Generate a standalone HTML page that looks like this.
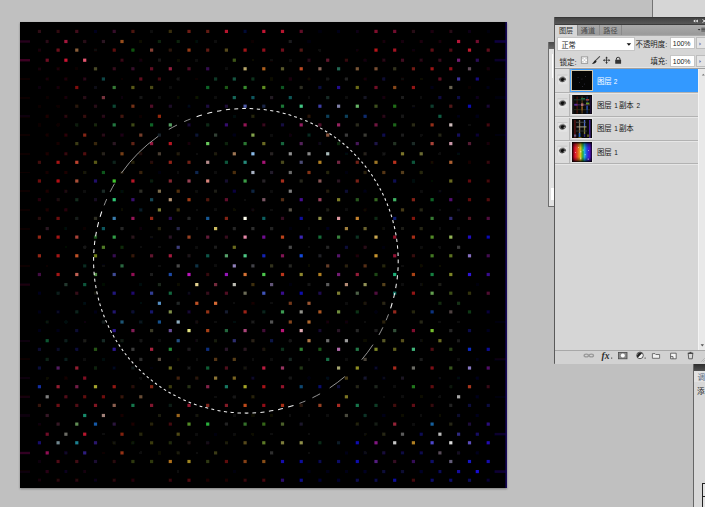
<!DOCTYPE html>
<html><head><meta charset="utf-8"><title>Photoshop</title>
<style>
html,body{margin:0;padding:0;}
body{width:705px;height:507px;overflow:hidden;background:#c0c0c0;position:relative;font-family:"Liberation Sans",sans-serif;}
.abs{position:absolute;}
#strip{left:652px;top:0;width:53px;height:17px;background:#d6d6d6;border-left:1.4px solid #747474;box-sizing:border-box;}
#canvas{left:20px;top:22px;width:487px;height:466px;background:#000;box-shadow:0 1px 2px rgba(0,0,0,.35);}
#cv{left:20px;top:22px;}
/* behind panel */
#bp{left:548px;top:42px;width:7px;height:165px;background:#e2e2e2;border-left:1px solid #6e6e6e;border-bottom:1px solid #6e6e6e;box-sizing:border-box;}
#bp .t{left:0;top:0;width:7px;height:7px;background:linear-gradient(#4a4a4a,#6a6a6a);}
/* layers panel */
#lp{left:554px;top:17px;width:151px;height:347px;background:#d6d6d6;border-left:1px solid #5a5a5a;border-bottom:1px solid #858585;box-sizing:border-box;}
#lp .title{left:0;top:0;width:151px;height:8px;background:linear-gradient(#303030 0,#444 18%,#565656 82%,#2e2e2e 100%);}
#lp .tabs{left:0;top:8px;width:151px;height:11px;background:linear-gradient(#aaa,#9a9a9a 85%,#b0b0b0);}
#lp .tab1{left:0;top:8px;width:21.6px;height:11.5px;background:#d6d6d6;}
.sep{background:#8b8b8b;width:1px;height:10px;top:8px;}
.wbox{background:#fff;border:1px solid #c6c6c6;box-sizing:border-box;}
.row{left:0;width:143px;height:24px;border-top:1px solid #e6e6e6;border-bottom:1px solid #b2b2b2;box-sizing:border-box;}
.eyecol{left:0;top:0;width:15px;height:22px;background:#dcdcdc;border-right:1px solid #b4b4b4;}
.hl{left:0;width:143px;height:1px;background:#b2b2b2}.ll{left:0;width:143px;height:1px;background:#e6e6e6}.thumb{left:17.3px;width:19.6px;height:19.3px;background:#0a0a0a;overflow:hidden;outline:1px solid #e6e6e6;}
.num{font-size:6.9px;color:#222;line-height:8px;white-space:pre;}
</style></head><body>
<div class="abs" id="strip"></div>
<div class="abs" id="canvas"></div>
<svg class="abs" id="cv" width="487" height="466" viewBox="20 22 487 466">
<defs><filter id="tb" x="-10%" y="-10%" width="120%" height="120%"><feGaussianBlur stdDeviation="0.55"/></filter><filter id="bl" x="-5%" y="-5%" width="110%" height="110%"><feGaussianBlur stdDeviation="0.75"/></filter></defs>
<g filter="url(#bl)"><rect x="20" y="40.3" width="10.0" height="2.4" fill="#25021b"/><rect x="20" y="59.0" width="10.0" height="2.4" fill="#3d0423"/><rect x="20" y="77.8" width="10.0" height="2.4" fill="#090106"/><rect x="20" y="96.4" width="10.0" height="2.4" fill="#090106"/><rect x="20" y="115.1" width="10.0" height="2.4" fill="#11020a"/><rect x="20" y="133.9" width="10.0" height="2.4" fill="#090103"/><rect x="20" y="152.6" width="10.0" height="2.4" fill="#090003"/><rect x="20" y="171.3" width="10.0" height="2.4" fill="#090003"/><rect x="20" y="190.0" width="10.0" height="2.4" fill="#090003"/><rect x="20" y="208.7" width="10.0" height="2.4" fill="#090003"/><rect x="20" y="227.4" width="10.0" height="2.4" fill="#090003"/><rect x="20" y="264.8" width="10.0" height="2.4" fill="#090003"/><rect x="20" y="283.4" width="10.0" height="2.4" fill="#1a030e"/><rect x="20" y="320.8" width="10.0" height="2.4" fill="#060106"/><rect x="20" y="339.6" width="10.0" height="2.4" fill="#11020a"/><rect x="20" y="358.2" width="10.0" height="2.4" fill="#090106"/><rect x="20" y="376.9" width="10.0" height="2.4" fill="#0d0209"/><rect x="20" y="395.6" width="10.0" height="2.4" fill="#15020e"/><rect x="20" y="414.3" width="10.0" height="2.4" fill="#11020a"/><rect x="20" y="451.8" width="10.0" height="2.4" fill="#310521"/><rect x="20" y="470.4" width="10.0" height="2.4" fill="#11020a"/><rect x="37.8" y="29.8" width="3.2" height="3.2" fill="#2f0715"/><rect x="37.8" y="48.5" width="3.2" height="3.2" fill="#180308"/><rect x="37.8" y="67.2" width="3.2" height="3.2" fill="#120307"/><rect x="37.8" y="85.9" width="3.2" height="3.2" fill="#0a0507"/><rect x="37.8" y="104.6" width="3.2" height="3.2" fill="#0e0204"/><rect x="37.8" y="123.3" width="3.2" height="3.2" fill="#0f0204"/><rect x="37.8" y="142.0" width="3.2" height="3.2" fill="#030000"/><rect x="37.8" y="160.7" width="3.2" height="3.2" fill="#40080b"/><rect x="37.8" y="179.4" width="3.2" height="3.2" fill="#6e0c11"/><rect x="37.8" y="198.1" width="3.2" height="3.2" fill="#270409"/><rect x="37.8" y="216.8" width="3.2" height="3.2" fill="#270a07"/><rect x="37.8" y="235.5" width="3.2" height="3.2" fill="#932817"/><rect x="37.8" y="254.2" width="3.2" height="3.2" fill="#932817"/><rect x="37.8" y="272.9" width="3.2" height="3.2" fill="#431043"/><rect x="37.8" y="291.6" width="3.2" height="3.2" fill="#05051b"/><rect x="37.8" y="310.3" width="3.2" height="3.2" fill="#040412"/><rect x="37.8" y="329.0" width="3.2" height="3.2" fill="#040416"/><rect x="37.8" y="347.7" width="3.2" height="3.2" fill="#080832"/><rect x="37.8" y="366.4" width="3.2" height="3.2" fill="#090c38"/><rect x="37.8" y="385.1" width="3.2" height="3.2" fill="#132ea0"/><rect x="37.8" y="403.8" width="3.2" height="3.2" fill="#35170c"/><rect x="37.8" y="422.5" width="3.2" height="3.2" fill="#0a0507"/><rect x="37.8" y="441.2" width="3.2" height="3.2" fill="#160b6a"/><rect x="37.8" y="459.9" width="3.2" height="3.2" fill="#0a050a"/><rect x="37.8" y="478.6" width="3.2" height="3.2" fill="#120307"/><rect x="45.6" y="39.9" width="3.2" height="3.2" fill="#270714"/><rect x="45.6" y="58.6" width="3.2" height="3.2" fill="#6e0c22"/><rect x="45.6" y="77.4" width="3.2" height="3.2" fill="#170308"/><rect x="45.6" y="96.0" width="3.2" height="3.2" fill="#0e0202"/><rect x="45.6" y="114.7" width="3.2" height="3.2" fill="#1c0305"/><rect x="45.6" y="133.5" width="3.2" height="3.2" fill="#120305"/><rect x="45.6" y="152.2" width="3.2" height="3.2" fill="#1c0205"/><rect x="45.6" y="170.9" width="3.2" height="3.2" fill="#120105"/><rect x="45.6" y="189.6" width="3.2" height="3.2" fill="#1c0205"/><rect x="45.6" y="208.3" width="3.2" height="3.2" fill="#1c0305"/><rect x="45.6" y="227.0" width="3.2" height="3.2" fill="#2a1720"/><rect x="45.6" y="264.3" width="3.2" height="3.2" fill="#070202"/><rect x="45.6" y="283.0" width="3.2" height="3.2" fill="#040404"/><rect x="45.6" y="301.7" width="3.2" height="3.2" fill="#020402"/><rect x="45.6" y="320.4" width="3.2" height="3.2" fill="#09140c"/><rect x="45.6" y="339.1" width="3.2" height="3.2" fill="#0f5430"/><rect x="45.6" y="357.8" width="3.2" height="3.2" fill="#0b2416"/><rect x="45.6" y="376.5" width="3.2" height="3.2" fill="#0b0b05"/><rect x="45.6" y="395.2" width="3.2" height="3.2" fill="#7f7f7f"/><rect x="45.6" y="413.9" width="3.2" height="3.2" fill="#361725"/><rect x="45.6" y="432.6" width="3.2" height="3.2" fill="#6f0f28"/><rect x="45.6" y="451.3" width="3.2" height="3.2" fill="#921055"/><rect x="45.6" y="470.0" width="3.2" height="3.2" fill="#270414"/><rect x="56.5" y="29.8" width="3.2" height="3.2" fill="#2f0711"/><rect x="56.5" y="48.5" width="3.2" height="3.2" fill="#6e0f1a"/><rect x="56.5" y="67.2" width="3.2" height="3.2" fill="#1c0308"/><rect x="56.5" y="85.9" width="3.2" height="3.2" fill="#170408"/><rect x="56.5" y="104.6" width="3.2" height="3.2" fill="#0e0204"/><rect x="56.5" y="123.3" width="3.2" height="3.2" fill="#0f0204"/><rect x="56.5" y="142.0" width="3.2" height="3.2" fill="#120305"/><rect x="56.5" y="160.7" width="3.2" height="3.2" fill="#a31212"/><rect x="56.5" y="179.4" width="3.2" height="3.2" fill="#b51013"/><rect x="56.5" y="198.1" width="3.2" height="3.2" fill="#1d0d10"/><rect x="56.5" y="216.8" width="3.2" height="3.2" fill="#6e0f0f"/><rect x="56.5" y="235.5" width="3.2" height="3.2" fill="#a31616"/><rect x="56.5" y="254.2" width="3.2" height="3.2" fill="#a31616"/><rect x="56.5" y="272.9" width="3.2" height="3.2" fill="#a31215"/><rect x="56.5" y="291.6" width="3.2" height="3.2" fill="#0b1e1a"/><rect x="56.5" y="310.3" width="3.2" height="3.2" fill="#080821"/><rect x="56.5" y="329.0" width="3.2" height="3.2" fill="#040416"/><rect x="56.5" y="347.7" width="3.2" height="3.2" fill="#090c27"/><rect x="56.5" y="366.4" width="3.2" height="3.2" fill="#531b61"/><rect x="56.5" y="385.1" width="3.2" height="3.2" fill="#931e31"/><rect x="56.5" y="403.8" width="3.2" height="3.2" fill="#6e0f12"/><rect x="56.5" y="422.5" width="3.2" height="3.2" fill="#361725"/><rect x="56.5" y="441.2" width="3.2" height="3.2" fill="#70878f"/><rect x="56.5" y="459.9" width="3.2" height="3.2" fill="#4f0913"/><rect x="56.5" y="478.6" width="3.2" height="3.2" fill="#27070c"/><rect x="64.3" y="39.9" width="3.2" height="3.2" fill="#a4173d"/><rect x="64.3" y="58.6" width="3.2" height="3.2" fill="#ca1333"/><rect x="64.3" y="77.4" width="3.2" height="3.2" fill="#1c040b"/><rect x="64.3" y="96.0" width="3.2" height="3.2" fill="#170408"/><rect x="64.3" y="114.7" width="3.2" height="3.2" fill="#27070c"/><rect x="64.3" y="133.5" width="3.2" height="3.2" fill="#2a0307"/><rect x="64.3" y="152.2" width="3.2" height="3.2" fill="#33070a"/><rect x="64.3" y="170.9" width="3.2" height="3.2" fill="#1c0205"/><rect x="64.3" y="189.6" width="3.2" height="3.2" fill="#1d0910"/><rect x="64.3" y="208.3" width="3.2" height="3.2" fill="#27040c"/><rect x="64.3" y="227.0" width="3.2" height="3.2" fill="#050b08"/><rect x="64.3" y="245.7" width="3.2" height="3.2" fill="#040704"/><rect x="64.3" y="264.3" width="3.2" height="3.2" fill="#040404"/><rect x="64.3" y="283.0" width="3.2" height="3.2" fill="#24392e"/><rect x="64.3" y="320.4" width="3.2" height="3.2" fill="#060f0f"/><rect x="64.3" y="339.1" width="3.2" height="3.2" fill="#0b1e1a"/><rect x="64.3" y="357.8" width="3.2" height="3.2" fill="#081e1a"/><rect x="64.3" y="376.5" width="3.2" height="3.2" fill="#120305"/><rect x="64.3" y="395.2" width="3.2" height="3.2" fill="#4f0a17"/><rect x="64.3" y="413.9" width="3.2" height="3.2" fill="#040404"/><rect x="64.3" y="432.6" width="3.2" height="3.2" fill="#6c6c65"/><rect x="64.3" y="451.3" width="3.2" height="3.2" fill="#0f0927"/><rect x="64.3" y="470.0" width="3.2" height="3.2" fill="#08051b"/><rect x="75.2" y="29.8" width="3.2" height="3.2" fill="#410c1b"/><rect x="75.2" y="48.5" width="3.2" height="3.2" fill="#895d38"/><rect x="75.2" y="67.2" width="3.2" height="3.2" fill="#0e0306"/><rect x="75.2" y="85.9" width="3.2" height="3.2" fill="#7e0d0f"/><rect x="75.2" y="104.6" width="3.2" height="3.2" fill="#29160b"/><rect x="75.2" y="123.3" width="3.2" height="3.2" fill="#0e1e0e"/><rect x="75.2" y="142.0" width="3.2" height="3.2" fill="#3a3a14"/><rect x="75.2" y="160.7" width="3.2" height="3.2" fill="#bc432e"/><rect x="75.2" y="179.4" width="3.2" height="3.2" fill="#ab5039"/><rect x="75.2" y="198.1" width="3.2" height="3.2" fill="#132b1c"/><rect x="75.2" y="216.8" width="3.2" height="3.2" fill="#161f1b"/><rect x="75.2" y="235.5" width="3.2" height="3.2" fill="#a94237"/><rect x="75.2" y="254.2" width="3.2" height="3.2" fill="#be5126"/><rect x="75.2" y="272.9" width="3.2" height="3.2" fill="#c16154"/><rect x="75.2" y="291.6" width="3.2" height="3.2" fill="#340e16"/><rect x="75.2" y="310.3" width="3.2" height="3.2" fill="#0b241b"/><rect x="75.2" y="329.0" width="3.2" height="3.2" fill="#091033"/><rect x="75.2" y="347.7" width="3.2" height="3.2" fill="#090938"/><rect x="75.2" y="366.4" width="3.2" height="3.2" fill="#931e31"/><rect x="75.2" y="385.1" width="3.2" height="3.2" fill="#711c47"/><rect x="75.2" y="403.8" width="3.2" height="3.2" fill="#4f0d13"/><rect x="75.2" y="422.5" width="3.2" height="3.2" fill="#618d54"/><rect x="75.2" y="441.2" width="3.2" height="3.2" fill="#1d8191"/><rect x="75.2" y="459.9" width="3.2" height="3.2" fill="#410c12"/><rect x="75.2" y="478.6" width="3.2" height="3.2" fill="#27070c"/><rect x="83.1" y="39.9" width="3.2" height="3.2" fill="#280a19"/><rect x="83.1" y="58.6" width="3.2" height="3.2" fill="#e65671"/><rect x="83.1" y="77.4" width="3.2" height="3.2" fill="#270714"/><rect x="83.1" y="96.0" width="3.2" height="3.2" fill="#280e15"/><rect x="83.1" y="114.7" width="3.2" height="3.2" fill="#340a0a"/><rect x="83.1" y="133.5" width="3.2" height="3.2" fill="#822616"/><rect x="83.1" y="152.2" width="3.2" height="3.2" fill="#4f090c"/><rect x="83.1" y="170.9" width="3.2" height="3.2" fill="#141407"/><rect x="83.1" y="189.6" width="3.2" height="3.2" fill="#0b0b0b"/><rect x="83.1" y="208.3" width="3.2" height="3.2" fill="#040404"/><rect x="83.1" y="227.0" width="3.2" height="3.2" fill="#0a0202"/><rect x="83.1" y="245.7" width="3.2" height="3.2" fill="#151515"/><rect x="83.1" y="264.3" width="3.2" height="3.2" fill="#092a20"/><rect x="83.1" y="283.0" width="3.2" height="3.2" fill="#0f553b"/><rect x="83.1" y="301.7" width="3.2" height="3.2" fill="#040f13"/><rect x="83.1" y="320.4" width="3.2" height="3.2" fill="#070407"/><rect x="83.1" y="339.1" width="3.2" height="3.2" fill="#1a1a16"/><rect x="83.1" y="357.8" width="3.2" height="3.2" fill="#080b0b"/><rect x="83.1" y="376.5" width="3.2" height="3.2" fill="#7f1024"/><rect x="83.1" y="395.2" width="3.2" height="3.2" fill="#5e0a10"/><rect x="83.1" y="413.9" width="3.2" height="3.2" fill="#17896a"/><rect x="83.1" y="432.6" width="3.2" height="3.2" fill="#b6142d"/><rect x="83.1" y="451.3" width="3.2" height="3.2" fill="#2d1e7e"/><rect x="83.1" y="470.0" width="3.2" height="3.2" fill="#12030b"/><rect x="93.9" y="29.8" width="3.2" height="3.2" fill="#06051b"/><rect x="93.9" y="48.5" width="3.2" height="3.2" fill="#100808"/><rect x="93.9" y="67.2" width="3.2" height="3.2" fill="#494928"/><rect x="93.9" y="85.9" width="3.2" height="3.2" fill="#080812"/><rect x="93.9" y="104.6" width="3.2" height="3.2" fill="#280a19"/><rect x="93.9" y="123.3" width="3.2" height="3.2" fill="#17250c"/><rect x="93.9" y="142.0" width="3.2" height="3.2" fill="#372711"/><rect x="93.9" y="160.7" width="3.2" height="3.2" fill="#595916"/><rect x="93.9" y="179.4" width="3.2" height="3.2" fill="#200f6b"/><rect x="93.9" y="198.1" width="3.2" height="3.2" fill="#151123"/><rect x="93.9" y="216.8" width="3.2" height="3.2" fill="#2d2d22"/><rect x="93.9" y="235.5" width="3.2" height="3.2" fill="#1d551d"/><rect x="93.9" y="254.2" width="3.2" height="3.2" fill="#6c7b19"/><rect x="93.9" y="272.9" width="3.2" height="3.2" fill="#528c46"/><rect x="93.9" y="291.6" width="3.2" height="3.2" fill="#151511"/><rect x="93.9" y="310.3" width="3.2" height="3.2" fill="#040416"/><rect x="93.9" y="329.0" width="3.2" height="3.2" fill="#020206"/><rect x="93.9" y="347.7" width="3.2" height="3.2" fill="#275516"/><rect x="93.9" y="366.4" width="3.2" height="3.2" fill="#0f240f"/><rect x="93.9" y="385.1" width="3.2" height="3.2" fill="#a3a32f"/><rect x="93.9" y="403.8" width="3.2" height="3.2" fill="#801424"/><rect x="93.9" y="422.5" width="3.2" height="3.2" fill="#1558a6"/><rect x="93.9" y="441.2" width="3.2" height="3.2" fill="#2c196d"/><rect x="93.9" y="459.9" width="3.2" height="3.2" fill="#1e0a33"/><rect x="93.9" y="478.6" width="3.2" height="3.2" fill="#070516"/><rect x="101.8" y="39.9" width="3.2" height="3.2" fill="#2a1720"/><rect x="101.8" y="58.6" width="3.2" height="3.2" fill="#060606"/><rect x="101.8" y="77.4" width="3.2" height="3.2" fill="#0e4646"/><rect x="101.8" y="96.0" width="3.2" height="3.2" fill="#74323d"/><rect x="101.8" y="114.7" width="3.2" height="3.2" fill="#270714"/><rect x="101.8" y="133.5" width="3.2" height="3.2" fill="#270714"/><rect x="101.8" y="152.2" width="3.2" height="3.2" fill="#25201c"/><rect x="101.8" y="170.9" width="3.2" height="3.2" fill="#0f541c"/><rect x="101.8" y="189.6" width="3.2" height="3.2" fill="#1d2c26"/><rect x="101.8" y="227.0" width="3.2" height="3.2" fill="#10565d"/><rect x="101.8" y="245.7" width="3.2" height="3.2" fill="#4f7925"/><rect x="101.8" y="264.3" width="3.2" height="3.2" fill="#07070b"/><rect x="101.8" y="283.0" width="3.2" height="3.2" fill="#040704"/><rect x="101.8" y="301.7" width="3.2" height="3.2" fill="#040404"/><rect x="101.8" y="320.4" width="3.2" height="3.2" fill="#161f1f"/><rect x="101.8" y="339.1" width="3.2" height="3.2" fill="#142b26"/><rect x="101.8" y="357.8" width="3.2" height="3.2" fill="#040707"/><rect x="101.8" y="376.5" width="3.2" height="3.2" fill="#040204"/><rect x="101.8" y="395.2" width="3.2" height="3.2" fill="#6e0f0f"/><rect x="101.8" y="413.9" width="3.2" height="3.2" fill="#a18179"/><rect x="101.8" y="432.6" width="3.2" height="3.2" fill="#070707"/><rect x="101.8" y="451.3" width="3.2" height="3.2" fill="#070404"/><rect x="101.8" y="470.0" width="3.2" height="3.2" fill="#010101"/><rect x="112.6" y="29.8" width="3.2" height="3.2" fill="#350b29"/><rect x="112.6" y="48.5" width="3.2" height="3.2" fill="#5e0e11"/><rect x="112.6" y="67.2" width="3.2" height="3.2" fill="#340b1a"/><rect x="112.6" y="85.9" width="3.2" height="3.2" fill="#367836"/><rect x="112.6" y="104.6" width="3.2" height="3.2" fill="#0d4633"/><rect x="112.6" y="123.3" width="3.2" height="3.2" fill="#227741"/><rect x="112.6" y="142.0" width="3.2" height="3.2" fill="#2a1720"/><rect x="112.6" y="160.7" width="3.2" height="3.2" fill="#0b241b"/><rect x="112.6" y="179.4" width="3.2" height="3.2" fill="#40c42d"/><rect x="112.6" y="198.1" width="3.2" height="3.2" fill="#2dc473"/><rect x="112.6" y="216.8" width="3.2" height="3.2" fill="#3a7bac"/><rect x="112.6" y="235.5" width="3.2" height="3.2" fill="#319c46"/><rect x="112.6" y="254.2" width="3.2" height="3.2" fill="#36104f"/><rect x="112.6" y="272.9" width="3.2" height="3.2" fill="#3f4b95"/><rect x="112.6" y="291.6" width="3.2" height="3.2" fill="#21187d"/><rect x="112.6" y="310.3" width="3.2" height="3.2" fill="#20136c"/><rect x="112.6" y="329.0" width="3.2" height="3.2" fill="#2d198e"/><rect x="112.6" y="347.7" width="3.2" height="3.2" fill="#2c158e"/><rect x="112.6" y="366.4" width="3.2" height="3.2" fill="#05081b"/><rect x="112.6" y="385.1" width="3.2" height="3.2" fill="#911912"/><rect x="112.6" y="403.8" width="3.2" height="3.2" fill="#8a5e50"/><rect x="112.6" y="422.5" width="3.2" height="3.2" fill="#2a133b"/><rect x="112.6" y="441.2" width="3.2" height="3.2" fill="#15150a"/><rect x="112.6" y="459.9" width="3.2" height="3.2" fill="#270709"/><rect x="112.6" y="478.6" width="3.2" height="3.2" fill="#270709"/><rect x="120.4" y="39.9" width="3.2" height="3.2" fill="#984e1c"/><rect x="120.4" y="58.6" width="3.2" height="3.2" fill="#340815"/><rect x="120.4" y="77.4" width="3.2" height="3.2" fill="#0a0204"/><rect x="120.4" y="96.0" width="3.2" height="3.2" fill="#0a0507"/><rect x="120.4" y="114.7" width="3.2" height="3.2" fill="#42180d"/><rect x="120.4" y="133.5" width="3.2" height="3.2" fill="#1d0614"/><rect x="120.4" y="152.2" width="3.2" height="3.2" fill="#743e18"/><rect x="120.4" y="170.9" width="3.2" height="3.2" fill="#1e150a"/><rect x="120.4" y="189.6" width="3.2" height="3.2" fill="#060f0b"/><rect x="120.4" y="208.3" width="3.2" height="3.2" fill="#0b0b05"/><rect x="120.4" y="227.0" width="3.2" height="3.2" fill="#262626"/><rect x="120.4" y="245.7" width="3.2" height="3.2" fill="#0f2a09"/><rect x="120.4" y="264.3" width="3.2" height="3.2" fill="#2a673f"/><rect x="120.4" y="283.0" width="3.2" height="3.2" fill="#040404"/><rect x="120.4" y="320.4" width="3.2" height="3.2" fill="#1f5774"/><rect x="120.4" y="339.1" width="3.2" height="3.2" fill="#121f16"/><rect x="120.4" y="357.8" width="3.2" height="3.2" fill="#010101"/><rect x="120.4" y="376.5" width="3.2" height="3.2" fill="#040402"/><rect x="120.4" y="395.2" width="3.2" height="3.2" fill="#351209"/><rect x="120.4" y="413.9" width="3.2" height="3.2" fill="#120305"/><rect x="120.4" y="432.6" width="3.2" height="3.2" fill="#81210f"/><rect x="120.4" y="451.3" width="3.2" height="3.2" fill="#953315"/><rect x="131.3" y="29.8" width="3.2" height="3.2" fill="#4b1510"/><rect x="131.3" y="48.5" width="3.2" height="3.2" fill="#0e5411"/><rect x="131.3" y="67.2" width="3.2" height="3.2" fill="#350f2a"/><rect x="131.3" y="85.9" width="3.2" height="3.2" fill="#595919"/><rect x="131.3" y="104.6" width="3.2" height="3.2" fill="#733116"/><rect x="131.3" y="123.3" width="3.2" height="3.2" fill="#3c4816"/><rect x="131.3" y="142.0" width="3.2" height="3.2" fill="#612414"/><rect x="131.3" y="160.7" width="3.2" height="3.2" fill="#252009"/><rect x="131.3" y="179.4" width="3.2" height="3.2" fill="#b71828"/><rect x="131.3" y="198.1" width="3.2" height="3.2" fill="#37116d"/><rect x="131.3" y="216.8" width="3.2" height="3.2" fill="#931656"/><rect x="131.3" y="235.5" width="3.2" height="3.2" fill="#2a161b"/><rect x="131.3" y="254.2" width="3.2" height="3.2" fill="#351709"/><rect x="131.3" y="272.9" width="3.2" height="3.2" fill="#921055"/><rect x="131.3" y="291.6" width="3.2" height="3.2" fill="#1f086b"/><rect x="131.3" y="310.3" width="3.2" height="3.2" fill="#0d1133"/><rect x="131.3" y="329.0" width="3.2" height="3.2" fill="#821e56"/><rect x="131.3" y="347.7" width="3.2" height="3.2" fill="#3b3b3b"/><rect x="131.3" y="366.4" width="3.2" height="3.2" fill="#111a1a"/><rect x="131.3" y="385.1" width="3.2" height="3.2" fill="#281108"/><rect x="131.3" y="403.8" width="3.2" height="3.2" fill="#14764c"/><rect x="131.3" y="422.5" width="3.2" height="3.2" fill="#1c0606"/><rect x="131.3" y="441.2" width="3.2" height="3.2" fill="#0a1907"/><rect x="131.3" y="459.9" width="3.2" height="3.2" fill="#2e3910"/><rect x="131.3" y="478.6" width="3.2" height="3.2" fill="#220609"/><rect x="139.2" y="39.9" width="3.2" height="3.2" fill="#0e0e06"/><rect x="139.2" y="58.6" width="3.2" height="3.2" fill="#13050b"/><rect x="139.2" y="77.4" width="3.2" height="3.2" fill="#5f0e1d"/><rect x="139.2" y="96.0" width="3.2" height="3.2" fill="#151515"/><rect x="139.2" y="114.7" width="3.2" height="3.2" fill="#0e0505"/><rect x="139.2" y="133.5" width="3.2" height="3.2" fill="#753e29"/><rect x="139.2" y="152.2" width="3.2" height="3.2" fill="#1e1107"/><rect x="139.2" y="170.9" width="3.2" height="3.2" fill="#37210d"/><rect x="139.2" y="189.6" width="3.2" height="3.2" fill="#2d2d27"/><rect x="139.2" y="208.3" width="3.2" height="3.2" fill="#081f29"/><rect x="139.2" y="227.0" width="3.2" height="3.2" fill="#0e0207"/><rect x="139.2" y="245.7" width="3.2" height="3.2" fill="#070707"/><rect x="139.2" y="264.3" width="3.2" height="3.2" fill="#040202"/><rect x="139.2" y="283.0" width="3.2" height="3.2" fill="#050b0b"/><rect x="139.2" y="301.7" width="3.2" height="3.2" fill="#040707"/><rect x="139.2" y="320.4" width="3.2" height="3.2" fill="#0a191e"/><rect x="139.2" y="339.1" width="3.2" height="3.2" fill="#151515"/><rect x="139.2" y="357.8" width="3.2" height="3.2" fill="#2d2d2d"/><rect x="139.2" y="376.5" width="3.2" height="3.2" fill="#0b0b0b"/><rect x="139.2" y="395.2" width="3.2" height="3.2" fill="#674c34"/><rect x="139.2" y="413.9" width="3.2" height="3.2" fill="#010101"/><rect x="139.2" y="432.6" width="3.2" height="3.2" fill="#26260d"/><rect x="139.2" y="451.3" width="3.2" height="3.2" fill="#0b0b0b"/><rect x="150.0" y="29.8" width="3.2" height="3.2" fill="#0c0c0c"/><rect x="150.0" y="48.5" width="3.2" height="3.2" fill="#864035"/><rect x="150.0" y="67.2" width="3.2" height="3.2" fill="#5f0e22"/><rect x="150.0" y="85.9" width="3.2" height="3.2" fill="#494917"/><rect x="150.0" y="104.6" width="3.2" height="3.2" fill="#500d26"/><rect x="150.0" y="123.3" width="3.2" height="3.2" fill="#116427"/><rect x="150.0" y="142.0" width="3.2" height="3.2" fill="#92163c"/><rect x="150.0" y="160.7" width="3.2" height="3.2" fill="#270a07"/><rect x="150.0" y="179.4" width="3.2" height="3.2" fill="#071e0d"/><rect x="150.0" y="198.1" width="3.2" height="3.2" fill="#154754"/><rect x="150.0" y="216.8" width="3.2" height="3.2" fill="#932817"/><rect x="150.0" y="235.5" width="3.2" height="3.2" fill="#07070b"/><rect x="150.0" y="254.2" width="3.2" height="3.2" fill="#5f122d"/><rect x="150.0" y="272.9" width="3.2" height="3.2" fill="#1a1a1a"/><rect x="150.0" y="291.6" width="3.2" height="3.2" fill="#313c93"/><rect x="150.0" y="310.3" width="3.2" height="3.2" fill="#12126b"/><rect x="150.0" y="329.0" width="3.2" height="3.2" fill="#3a3a25"/><rect x="150.0" y="347.7" width="3.2" height="3.2" fill="#a5203e"/><rect x="150.0" y="366.4" width="3.2" height="3.2" fill="#040407"/><rect x="150.0" y="385.1" width="3.2" height="3.2" fill="#822613"/><rect x="150.0" y="403.8" width="3.2" height="3.2" fill="#81182f"/><rect x="150.0" y="422.5" width="3.2" height="3.2" fill="#252009"/><rect x="150.0" y="441.2" width="3.2" height="3.2" fill="#3a3a11"/><rect x="150.0" y="459.9" width="3.2" height="3.2" fill="#2e390d"/><rect x="150.0" y="478.6" width="3.2" height="3.2" fill="#040202"/><rect x="157.8" y="39.9" width="3.2" height="3.2" fill="#08240b"/><rect x="157.8" y="58.6" width="3.2" height="3.2" fill="#191515"/><rect x="157.8" y="77.4" width="3.2" height="3.2" fill="#41080e"/><rect x="157.8" y="96.0" width="3.2" height="3.2" fill="#070707"/><rect x="157.8" y="114.7" width="3.2" height="3.2" fill="#932811"/><rect x="157.8" y="133.5" width="3.2" height="3.2" fill="#17202a"/><rect x="157.8" y="152.2" width="3.2" height="3.2" fill="#483c30"/><rect x="157.8" y="170.9" width="3.2" height="3.2" fill="#04040e"/><rect x="157.8" y="189.6" width="3.2" height="3.2" fill="#7b6c4b"/><rect x="157.8" y="208.3" width="3.2" height="3.2" fill="#7d7d31"/><rect x="157.8" y="227.0" width="3.2" height="3.2" fill="#252009"/><rect x="157.8" y="245.7" width="3.2" height="3.2" fill="#070707"/><rect x="157.8" y="264.3" width="3.2" height="3.2" fill="#070707"/><rect x="157.8" y="283.0" width="3.2" height="3.2" fill="#1c251c"/><rect x="157.8" y="301.7" width="3.2" height="3.2" fill="#568fc2"/><rect x="157.8" y="320.4" width="3.2" height="3.2" fill="#17508b"/><rect x="157.8" y="339.1" width="3.2" height="3.2" fill="#101009"/><rect x="157.8" y="357.8" width="3.2" height="3.2" fill="#584b3f"/><rect x="157.8" y="413.9" width="3.2" height="3.2" fill="#1a1a0b"/><rect x="157.8" y="451.3" width="3.2" height="3.2" fill="#101006"/><rect x="168.7" y="29.8" width="3.2" height="3.2" fill="#382d0f"/><rect x="168.7" y="48.5" width="3.2" height="3.2" fill="#29160b"/><rect x="168.7" y="67.2" width="3.2" height="3.2" fill="#931e3d"/><rect x="168.7" y="85.9" width="3.2" height="3.2" fill="#0f080b"/><rect x="168.7" y="104.6" width="3.2" height="3.2" fill="#1d0a28"/><rect x="168.7" y="123.3" width="3.2" height="3.2" fill="#559f63"/><rect x="168.7" y="142.0" width="3.2" height="3.2" fill="#b61423"/><rect x="168.7" y="160.7" width="3.2" height="3.2" fill="#932216"/><rect x="168.7" y="179.4" width="3.2" height="3.2" fill="#832731"/><rect x="168.7" y="198.1" width="3.2" height="3.2" fill="#b59475"/><rect x="168.7" y="216.8" width="3.2" height="3.2" fill="#2a0f4f"/><rect x="168.7" y="235.5" width="3.2" height="3.2" fill="#291224"/><rect x="168.7" y="254.2" width="3.2" height="3.2" fill="#a51b3e"/><rect x="168.7" y="272.9" width="3.2" height="3.2" fill="#1f4aa4"/><rect x="168.7" y="291.6" width="3.2" height="3.2" fill="#12653d"/><rect x="168.7" y="310.3" width="3.2" height="3.2" fill="#808f49"/><rect x="168.7" y="329.0" width="3.2" height="3.2" fill="#694e98"/><rect x="168.7" y="347.7" width="3.2" height="3.2" fill="#248837"/><rect x="168.7" y="366.4" width="3.2" height="3.2" fill="#6a6a1d"/><rect x="168.7" y="385.1" width="3.2" height="3.2" fill="#3a3a11"/><rect x="168.7" y="403.8" width="3.2" height="3.2" fill="#081e15"/><rect x="168.7" y="422.5" width="3.2" height="3.2" fill="#41080e"/><rect x="168.7" y="441.2" width="3.2" height="3.2" fill="#212b11"/><rect x="168.7" y="459.9" width="3.2" height="3.2" fill="#ae6f1b"/><rect x="168.7" y="478.6" width="3.2" height="3.2" fill="#33070a"/><rect x="176.6" y="39.9" width="3.2" height="3.2" fill="#0b240b"/><rect x="176.6" y="58.6" width="3.2" height="3.2" fill="#101006"/><rect x="176.6" y="77.4" width="3.2" height="3.2" fill="#151515"/><rect x="176.6" y="96.0" width="3.2" height="3.2" fill="#080f06"/><rect x="176.6" y="114.7" width="3.2" height="3.2" fill="#070707"/><rect x="176.6" y="133.5" width="3.2" height="3.2" fill="#0b0b0b"/><rect x="176.6" y="152.2" width="3.2" height="3.2" fill="#241b0b"/><rect x="176.6" y="170.9" width="3.2" height="3.2" fill="#070707"/><rect x="176.6" y="189.6" width="3.2" height="3.2" fill="#532f11"/><rect x="176.6" y="208.3" width="3.2" height="3.2" fill="#382d0c"/><rect x="176.6" y="227.0" width="3.2" height="3.2" fill="#27274a"/><rect x="176.6" y="245.7" width="3.2" height="3.2" fill="#3d3d7b"/><rect x="176.6" y="264.3" width="3.2" height="3.2" fill="#4a4a4a"/><rect x="176.6" y="283.0" width="3.2" height="3.2" fill="#101006"/><rect x="176.6" y="301.7" width="3.2" height="3.2" fill="#212626"/><rect x="176.6" y="320.4" width="3.2" height="3.2" fill="#8fafc0"/><rect x="176.6" y="339.1" width="3.2" height="3.2" fill="#235083"/><rect x="176.6" y="357.8" width="3.2" height="3.2" fill="#0f0803"/><rect x="176.6" y="376.5" width="3.2" height="3.2" fill="#44220e"/><rect x="176.6" y="413.9" width="3.2" height="3.2" fill="#9b651f"/><rect x="176.6" y="432.6" width="3.2" height="3.2" fill="#504914"/><rect x="176.6" y="451.3" width="3.2" height="3.2" fill="#1a1a0b"/><rect x="176.6" y="470.0" width="3.2" height="3.2" fill="#070707"/><rect x="187.4" y="29.8" width="3.2" height="3.2" fill="#701b13"/><rect x="187.4" y="48.5" width="3.2" height="3.2" fill="#963a16"/><rect x="187.4" y="67.2" width="3.2" height="3.2" fill="#501126"/><rect x="187.4" y="85.9" width="3.2" height="3.2" fill="#040202"/><rect x="187.4" y="104.6" width="3.2" height="3.2" fill="#050817"/><rect x="187.4" y="123.3" width="3.2" height="3.2" fill="#140933"/><rect x="187.4" y="142.0" width="3.2" height="3.2" fill="#120307"/><rect x="187.4" y="160.7" width="3.2" height="3.2" fill="#702018"/><rect x="187.4" y="179.4" width="3.2" height="3.2" fill="#984255"/><rect x="187.4" y="198.1" width="3.2" height="3.2" fill="#9f3a14"/><rect x="187.4" y="216.8" width="3.2" height="3.2" fill="#262626"/><rect x="187.4" y="235.5" width="3.2" height="3.2" fill="#974122"/><rect x="187.4" y="254.2" width="3.2" height="3.2" fill="#1f161a"/><rect x="187.4" y="272.9" width="3.2" height="3.2" fill="#ba15ba"/><rect x="187.4" y="291.6" width="3.2" height="3.2" fill="#0b0817"/><rect x="187.4" y="310.3" width="3.2" height="3.2" fill="#140933"/><rect x="187.4" y="329.0" width="3.2" height="3.2" fill="#e6e682"/><rect x="187.4" y="347.7" width="3.2" height="3.2" fill="#1f1b1f"/><rect x="187.4" y="366.4" width="3.2" height="3.2" fill="#1a1a1a"/><rect x="187.4" y="385.1" width="3.2" height="3.2" fill="#273215"/><rect x="187.4" y="403.8" width="3.2" height="3.2" fill="#921a31"/><rect x="187.4" y="422.5" width="3.2" height="3.2" fill="#528b27"/><rect x="187.4" y="441.2" width="3.2" height="3.2" fill="#1e1515"/><rect x="187.4" y="459.9" width="3.2" height="3.2" fill="#a08720"/><rect x="187.4" y="478.6" width="3.2" height="3.2" fill="#4f090f"/><rect x="195.2" y="39.9" width="3.2" height="3.2" fill="#050f08"/><rect x="195.2" y="58.6" width="3.2" height="3.2" fill="#101010"/><rect x="195.2" y="77.4" width="3.2" height="3.2" fill="#0a0404"/><rect x="195.2" y="96.0" width="3.2" height="3.2" fill="#0c1406"/><rect x="195.2" y="133.5" width="3.2" height="3.2" fill="#0a1533"/><rect x="195.2" y="152.2" width="3.2" height="3.2" fill="#070707"/><rect x="195.2" y="170.9" width="3.2" height="3.2" fill="#0a254f"/><rect x="195.2" y="189.6" width="3.2" height="3.2" fill="#101009"/><rect x="195.2" y="208.3" width="3.2" height="3.2" fill="#070707"/><rect x="195.2" y="227.0" width="3.2" height="3.2" fill="#070707"/><rect x="195.2" y="245.7" width="3.2" height="3.2" fill="#0b0b0b"/><rect x="195.2" y="264.3" width="3.2" height="3.2" fill="#0e3244"/><rect x="195.2" y="283.0" width="3.2" height="3.2" fill="#e4d18f"/><rect x="195.2" y="301.7" width="3.2" height="3.2" fill="#be5126"/><rect x="195.2" y="320.4" width="3.2" height="3.2" fill="#140c10"/><rect x="195.2" y="339.1" width="3.2" height="3.2" fill="#0f080b"/><rect x="195.2" y="357.8" width="3.2" height="3.2" fill="#070707"/><rect x="195.2" y="376.5" width="3.2" height="3.2" fill="#29160b"/><rect x="195.2" y="413.9" width="3.2" height="3.2" fill="#151511"/><rect x="195.2" y="432.6" width="3.2" height="3.2" fill="#0b0b0b"/><rect x="195.2" y="451.3" width="3.2" height="3.2" fill="#070707"/><rect x="206.1" y="29.8" width="3.2" height="3.2" fill="#601a12"/><rect x="206.1" y="48.5" width="3.2" height="3.2" fill="#601a12"/><rect x="206.1" y="67.2" width="3.2" height="3.2" fill="#36104f"/><rect x="206.1" y="85.9" width="3.2" height="3.2" fill="#116427"/><rect x="206.1" y="104.6" width="3.2" height="3.2" fill="#1e0a40"/><rect x="206.1" y="123.3" width="3.2" height="3.2" fill="#0f2a17"/><rect x="206.1" y="142.0" width="3.2" height="3.2" fill="#68c85b"/><rect x="206.1" y="160.7" width="3.2" height="3.2" fill="#b58b8b"/><rect x="206.1" y="179.4" width="3.2" height="3.2" fill="#da857d"/><rect x="206.1" y="198.1" width="3.2" height="3.2" fill="#50140d"/><rect x="206.1" y="216.8" width="3.2" height="3.2" fill="#185894"/><rect x="206.1" y="235.5" width="3.2" height="3.2" fill="#611b39"/><rect x="206.1" y="254.2" width="3.2" height="3.2" fill="#105548"/><rect x="206.1" y="272.9" width="3.2" height="3.2" fill="#33070d"/><rect x="206.1" y="291.6" width="3.2" height="3.2" fill="#340b1a"/><rect x="206.1" y="310.3" width="3.2" height="3.2" fill="#953315"/><rect x="206.1" y="329.0" width="3.2" height="3.2" fill="#a94116"/><rect x="206.1" y="347.7" width="3.2" height="3.2" fill="#0f2d7e"/><rect x="206.1" y="366.4" width="3.2" height="3.2" fill="#105d36"/><rect x="206.1" y="385.1" width="3.2" height="3.2" fill="#822249"/><rect x="206.1" y="403.8" width="3.2" height="3.2" fill="#82271e"/><rect x="206.1" y="422.5" width="3.2" height="3.2" fill="#29af3c"/><rect x="206.1" y="441.2" width="3.2" height="3.2" fill="#141019"/><rect x="206.1" y="459.9" width="3.2" height="3.2" fill="#2e3913"/><rect x="206.1" y="478.6" width="3.2" height="3.2" fill="#1c0606"/><rect x="214.0" y="39.9" width="3.2" height="3.2" fill="#070707"/><rect x="214.0" y="77.4" width="3.2" height="3.2" fill="#0e3727"/><rect x="214.0" y="96.0" width="3.2" height="3.2" fill="#070707"/><rect x="214.0" y="133.5" width="3.2" height="3.2" fill="#304135"/><rect x="214.0" y="152.2" width="3.2" height="3.2" fill="#1f1a0b"/><rect x="214.0" y="170.9" width="3.2" height="3.2" fill="#0b0b0b"/><rect x="214.0" y="189.6" width="3.2" height="3.2" fill="#1a1a12"/><rect x="214.0" y="208.3" width="3.2" height="3.2" fill="#0b0b0b"/><rect x="214.0" y="227.0" width="3.2" height="3.2" fill="#ccbb60"/><rect x="214.0" y="245.7" width="3.2" height="3.2" fill="#1a1a1a"/><rect x="214.0" y="264.3" width="3.2" height="3.2" fill="#0b0b0b"/><rect x="214.0" y="283.0" width="3.2" height="3.2" fill="#732c3d"/><rect x="214.0" y="301.7" width="3.2" height="3.2" fill="#d56a34"/><rect x="214.0" y="320.4" width="3.2" height="3.2" fill="#070707"/><rect x="214.0" y="339.1" width="3.2" height="3.2" fill="#151a0a"/><rect x="214.0" y="357.8" width="3.2" height="3.2" fill="#543519"/><rect x="214.0" y="376.5" width="3.2" height="3.2" fill="#8c7536"/><rect x="214.0" y="395.2" width="3.2" height="3.2" fill="#070707"/><rect x="214.0" y="432.6" width="3.2" height="3.2" fill="#04040a"/><rect x="214.0" y="451.3" width="3.2" height="3.2" fill="#3a3a14"/><rect x="224.8" y="29.8" width="3.2" height="3.2" fill="#b6142d"/><rect x="224.8" y="48.5" width="3.2" height="3.2" fill="#574a1b"/><rect x="224.8" y="67.2" width="3.2" height="3.2" fill="#0f0c0c"/><rect x="224.8" y="85.9" width="3.2" height="3.2" fill="#1d5519"/><rect x="224.8" y="104.6" width="3.2" height="3.2" fill="#1e0e34"/><rect x="224.8" y="123.3" width="3.2" height="3.2" fill="#360d6d"/><rect x="224.8" y="142.0" width="3.2" height="3.2" fill="#0f240f"/><rect x="224.8" y="160.7" width="3.2" height="3.2" fill="#0f553b"/><rect x="224.8" y="179.4" width="3.2" height="3.2" fill="#140d2d"/><rect x="224.8" y="198.1" width="3.2" height="3.2" fill="#5f0e2c"/><rect x="224.8" y="216.8" width="3.2" height="3.2" fill="#812119"/><rect x="224.8" y="235.5" width="3.2" height="3.2" fill="#340b1f"/><rect x="224.8" y="254.2" width="3.2" height="3.2" fill="#56a06a"/><rect x="224.8" y="272.9" width="3.2" height="3.2" fill="#9412b7"/><rect x="224.8" y="291.6" width="3.2" height="3.2" fill="#4f0a20"/><rect x="224.8" y="310.3" width="3.2" height="3.2" fill="#121a2f"/><rect x="224.8" y="329.0" width="3.2" height="3.2" fill="#20663e"/><rect x="224.8" y="347.7" width="3.2" height="3.2" fill="#2a172a"/><rect x="224.8" y="366.4" width="3.2" height="3.2" fill="#4f0d1c"/><rect x="224.8" y="385.1" width="3.2" height="3.2" fill="#157761"/><rect x="224.8" y="403.8" width="3.2" height="3.2" fill="#811d26"/><rect x="224.8" y="422.5" width="3.2" height="3.2" fill="#202020"/><rect x="224.8" y="441.2" width="3.2" height="3.2" fill="#1a1a08"/><rect x="224.8" y="459.9" width="3.2" height="3.2" fill="#5e0a0d"/><rect x="224.8" y="478.6" width="3.2" height="3.2" fill="#1c0305"/><rect x="232.7" y="39.9" width="3.2" height="3.2" fill="#010101"/><rect x="232.7" y="58.6" width="3.2" height="3.2" fill="#3e5718"/><rect x="232.7" y="77.4" width="3.2" height="3.2" fill="#165542"/><rect x="232.7" y="96.0" width="3.2" height="3.2" fill="#196658"/><rect x="232.7" y="114.7" width="3.2" height="3.2" fill="#060f0f"/><rect x="232.7" y="133.5" width="3.2" height="3.2" fill="#040416"/><rect x="232.7" y="152.2" width="3.2" height="3.2" fill="#9f7755"/><rect x="232.7" y="170.9" width="3.2" height="3.2" fill="#4c2e0e"/><rect x="232.7" y="189.6" width="3.2" height="3.2" fill="#08063e"/><rect x="232.7" y="208.3" width="3.2" height="3.2" fill="#0b0b05"/><rect x="232.7" y="227.0" width="3.2" height="3.2" fill="#262626"/><rect x="232.7" y="245.7" width="3.2" height="3.2" fill="#6a6a1d"/><rect x="232.7" y="264.3" width="3.2" height="3.2" fill="#9181bb"/><rect x="232.7" y="283.0" width="3.2" height="3.2" fill="#bcbcb3"/><rect x="232.7" y="301.7" width="3.2" height="3.2" fill="#070707"/><rect x="232.7" y="320.4" width="3.2" height="3.2" fill="#050b0b"/><rect x="232.7" y="339.1" width="3.2" height="3.2" fill="#2f2f70"/><rect x="232.7" y="357.8" width="3.2" height="3.2" fill="#553c16"/><rect x="232.7" y="376.5" width="3.2" height="3.2" fill="#796320"/><rect x="232.7" y="395.2" width="3.2" height="3.2" fill="#151515"/><rect x="232.7" y="413.9" width="3.2" height="3.2" fill="#0b0b08"/><rect x="232.7" y="432.6" width="3.2" height="3.2" fill="#101009"/><rect x="232.7" y="470.0" width="3.2" height="3.2" fill="#04040a"/><rect x="243.5" y="29.8" width="3.2" height="3.2" fill="#060832"/><rect x="243.5" y="48.5" width="3.2" height="3.2" fill="#a31219"/><rect x="243.5" y="67.2" width="3.2" height="3.2" fill="#b7a669"/><rect x="243.5" y="85.9" width="3.2" height="3.2" fill="#388a2e"/><rect x="243.5" y="104.6" width="3.2" height="3.2" fill="#4f5caa"/><rect x="243.5" y="123.3" width="3.2" height="3.2" fill="#921355"/><rect x="243.5" y="142.0" width="3.2" height="3.2" fill="#2b7730"/><rect x="243.5" y="160.7" width="3.2" height="3.2" fill="#268a7b"/><rect x="243.5" y="179.4" width="3.2" height="3.2" fill="#3b9d47"/><rect x="243.5" y="198.1" width="3.2" height="3.2" fill="#070707"/><rect x="243.5" y="216.8" width="3.2" height="3.2" fill="#ffffed"/><rect x="243.5" y="235.5" width="3.2" height="3.2" fill="#e587a7"/><rect x="243.5" y="254.2" width="3.2" height="3.2" fill="#4ec784"/><rect x="243.5" y="272.9" width="3.2" height="3.2" fill="#d67235"/><rect x="243.5" y="291.6" width="3.2" height="3.2" fill="#6c6c57"/><rect x="243.5" y="310.3" width="3.2" height="3.2" fill="#9c2317"/><rect x="243.5" y="329.0" width="3.2" height="3.2" fill="#ab447a"/><rect x="243.5" y="347.7" width="3.2" height="3.2" fill="#2a1720"/><rect x="243.5" y="366.4" width="3.2" height="3.2" fill="#191511"/><rect x="243.5" y="385.1" width="3.2" height="3.2" fill="#a3a327"/><rect x="243.5" y="403.8" width="3.2" height="3.2" fill="#bd4a1a"/><rect x="243.5" y="422.5" width="3.2" height="3.2" fill="#356f2b"/><rect x="243.5" y="441.2" width="3.2" height="3.2" fill="#574a1b"/><rect x="243.5" y="459.9" width="3.2" height="3.2" fill="#853f13"/><rect x="243.5" y="478.6" width="3.2" height="3.2" fill="#33070a"/><rect x="251.3" y="39.9" width="3.2" height="3.2" fill="#0a0202"/><rect x="251.3" y="58.6" width="3.2" height="3.2" fill="#070705"/><rect x="251.3" y="77.4" width="3.2" height="3.2" fill="#0d301c"/><rect x="251.3" y="96.0" width="3.2" height="3.2" fill="#10565d"/><rect x="251.3" y="114.7" width="3.2" height="3.2" fill="#26260d"/><rect x="251.3" y="133.5" width="3.2" height="3.2" fill="#82a24c"/><rect x="251.3" y="152.2" width="3.2" height="3.2" fill="#89b9e7"/><rect x="251.3" y="170.9" width="3.2" height="3.2" fill="#a9b1c2"/><rect x="251.3" y="189.6" width="3.2" height="3.2" fill="#102542"/><rect x="251.3" y="208.3" width="3.2" height="3.2" fill="#0f080b"/><rect x="251.3" y="227.0" width="3.2" height="3.2" fill="#2d2d2d"/><rect x="251.3" y="245.7" width="3.2" height="3.2" fill="#010101"/><rect x="251.3" y="264.3" width="3.2" height="3.2" fill="#434349"/><rect x="251.3" y="283.0" width="3.2" height="3.2" fill="#3e2d0d"/><rect x="251.3" y="301.7" width="3.2" height="3.2" fill="#120505"/><rect x="251.3" y="320.4" width="3.2" height="3.2" fill="#1a1a1a"/><rect x="251.3" y="339.1" width="3.2" height="3.2" fill="#2b2118"/><rect x="251.3" y="357.8" width="3.2" height="3.2" fill="#070707"/><rect x="251.3" y="376.5" width="3.2" height="3.2" fill="#0c0826"/><rect x="251.3" y="395.2" width="3.2" height="3.2" fill="#252009"/><rect x="251.3" y="413.9" width="3.2" height="3.2" fill="#101006"/><rect x="251.3" y="432.6" width="3.2" height="3.2" fill="#0b0b05"/><rect x="262.2" y="29.8" width="3.2" height="3.2" fill="#c01533"/><rect x="262.2" y="48.5" width="3.2" height="3.2" fill="#91111c"/><rect x="262.2" y="67.2" width="3.2" height="3.2" fill="#ad5f1f"/><rect x="262.2" y="85.9" width="3.2" height="3.2" fill="#5f8c20"/><rect x="262.2" y="104.6" width="3.2" height="3.2" fill="#1d274a"/><rect x="262.2" y="123.3" width="3.2" height="3.2" fill="#34081a"/><rect x="262.2" y="142.0" width="3.2" height="3.2" fill="#6a6a24"/><rect x="262.2" y="160.7" width="3.2" height="3.2" fill="#a51274"/><rect x="262.2" y="179.4" width="3.2" height="3.2" fill="#262126"/><rect x="262.2" y="198.1" width="3.2" height="3.2" fill="#795563"/><rect x="262.2" y="216.8" width="3.2" height="3.2" fill="#115e5e"/><rect x="262.2" y="235.5" width="3.2" height="3.2" fill="#710f91"/><rect x="262.2" y="254.2" width="3.2" height="3.2" fill="#1223b1"/><rect x="262.2" y="272.9" width="3.2" height="3.2" fill="#4dc64d"/><rect x="262.2" y="291.6" width="3.2" height="3.2" fill="#4154ba"/><rect x="262.2" y="310.3" width="3.2" height="3.2" fill="#09241a"/><rect x="262.2" y="329.0" width="3.2" height="3.2" fill="#420d36"/><rect x="262.2" y="347.7" width="3.2" height="3.2" fill="#1e150e"/><rect x="262.2" y="366.4" width="3.2" height="3.2" fill="#b81c3f"/><rect x="262.2" y="385.1" width="3.2" height="3.2" fill="#a31219"/><rect x="262.2" y="403.8" width="3.2" height="3.2" fill="#901118"/><rect x="262.2" y="422.5" width="3.2" height="3.2" fill="#346619"/><rect x="262.2" y="441.2" width="3.2" height="3.2" fill="#5d7a26"/><rect x="262.2" y="459.9" width="3.2" height="3.2" fill="#874d18"/><rect x="262.2" y="478.6" width="3.2" height="3.2" fill="#41080e"/><rect x="270.0" y="58.6" width="3.2" height="3.2" fill="#0b0808"/><rect x="270.0" y="77.4" width="3.2" height="3.2" fill="#101006"/><rect x="270.0" y="96.0" width="3.2" height="3.2" fill="#201b24"/><rect x="270.0" y="133.5" width="3.2" height="3.2" fill="#0b0b0b"/><rect x="270.0" y="152.2" width="3.2" height="3.2" fill="#252020"/><rect x="270.0" y="170.9" width="3.2" height="3.2" fill="#201b2a"/><rect x="270.0" y="189.6" width="3.2" height="3.2" fill="#090f0f"/><rect x="270.0" y="208.3" width="3.2" height="3.2" fill="#070707"/><rect x="270.0" y="227.0" width="3.2" height="3.2" fill="#202020"/><rect x="270.0" y="264.3" width="3.2" height="3.2" fill="#33331f"/><rect x="270.0" y="283.0" width="3.2" height="3.2" fill="#625478"/><rect x="270.0" y="301.7" width="3.2" height="3.2" fill="#070707"/><rect x="270.0" y="320.4" width="3.2" height="3.2" fill="#525252"/><rect x="270.0" y="339.1" width="3.2" height="3.2" fill="#0e1647"/><rect x="270.0" y="357.8" width="3.2" height="3.2" fill="#0b0b08"/><rect x="270.0" y="376.5" width="3.2" height="3.2" fill="#010101"/><rect x="270.0" y="413.9" width="3.2" height="3.2" fill="#0b0805"/><rect x="270.0" y="432.6" width="3.2" height="3.2" fill="#070707"/><rect x="270.0" y="451.3" width="3.2" height="3.2" fill="#2d2d2d"/><rect x="280.9" y="29.8" width="3.2" height="3.2" fill="#b6142d"/><rect x="280.9" y="48.5" width="3.2" height="3.2" fill="#6e0f1a"/><rect x="280.9" y="67.2" width="3.2" height="3.2" fill="#59592a"/><rect x="280.9" y="85.9" width="3.2" height="3.2" fill="#0f5421"/><rect x="280.9" y="104.6" width="3.2" height="3.2" fill="#1a7634"/><rect x="280.9" y="123.3" width="3.2" height="3.2" fill="#150d40"/><rect x="280.9" y="142.0" width="3.2" height="3.2" fill="#12653d"/><rect x="280.9" y="160.7" width="3.2" height="3.2" fill="#49491e"/><rect x="280.9" y="179.4" width="3.2" height="3.2" fill="#a62f1d"/><rect x="280.9" y="198.1" width="3.2" height="3.2" fill="#542f14"/><rect x="280.9" y="216.8" width="3.2" height="3.2" fill="#340b24"/><rect x="280.9" y="235.5" width="3.2" height="3.2" fill="#bc431d"/><rect x="280.9" y="254.2" width="3.2" height="3.2" fill="#811254"/><rect x="280.9" y="272.9" width="3.2" height="3.2" fill="#ba361b"/><rect x="280.9" y="291.6" width="3.2" height="3.2" fill="#370e8d"/><rect x="280.9" y="310.3" width="3.2" height="3.2" fill="#3c9d53"/><rect x="280.9" y="329.0" width="3.2" height="3.2" fill="#b81375"/><rect x="280.9" y="347.7" width="3.2" height="3.2" fill="#0a301c"/><rect x="280.9" y="366.4" width="3.2" height="3.2" fill="#973561"/><rect x="280.9" y="385.1" width="3.2" height="3.2" fill="#91122a"/><rect x="280.9" y="403.8" width="3.2" height="3.2" fill="#a62f16"/><rect x="280.9" y="422.5" width="3.2" height="3.2" fill="#4c602b"/><rect x="280.9" y="441.2" width="3.2" height="3.2" fill="#7d7d3b"/><rect x="280.9" y="459.9" width="3.2" height="3.2" fill="#170aae"/><rect x="280.9" y="478.6" width="3.2" height="3.2" fill="#2a096b"/><rect x="288.7" y="39.9" width="3.2" height="3.2" fill="#1a1a1f"/><rect x="288.7" y="58.6" width="3.2" height="3.2" fill="#0b0b0b"/><rect x="288.7" y="77.4" width="3.2" height="3.2" fill="#1c060f"/><rect x="288.7" y="96.0" width="3.2" height="3.2" fill="#105555"/><rect x="288.7" y="133.5" width="3.2" height="3.2" fill="#0e050b"/><rect x="288.7" y="152.2" width="3.2" height="3.2" fill="#929292"/><rect x="288.7" y="170.9" width="3.2" height="3.2" fill="#6c6c6c"/><rect x="288.7" y="189.6" width="3.2" height="3.2" fill="#7f7f7f"/><rect x="288.7" y="208.3" width="3.2" height="3.2" fill="#595246"/><rect x="288.7" y="227.0" width="3.2" height="3.2" fill="#04040a"/><rect x="288.7" y="245.7" width="3.2" height="3.2" fill="#4a4a4a"/><rect x="288.7" y="264.3" width="3.2" height="3.2" fill="#262621"/><rect x="288.7" y="283.0" width="3.2" height="3.2" fill="#04040a"/><rect x="288.7" y="301.7" width="3.2" height="3.2" fill="#73371b"/><rect x="288.7" y="320.4" width="3.2" height="3.2" fill="#86461e"/><rect x="288.7" y="339.1" width="3.2" height="3.2" fill="#151515"/><rect x="288.7" y="357.8" width="3.2" height="3.2" fill="#172520"/><rect x="288.7" y="376.5" width="3.2" height="3.2" fill="#151515"/><rect x="288.7" y="413.9" width="3.2" height="3.2" fill="#070707"/><rect x="288.7" y="432.6" width="3.2" height="3.2" fill="#040404"/><rect x="288.7" y="451.3" width="3.2" height="3.2" fill="#040404"/><rect x="299.6" y="29.8" width="3.2" height="3.2" fill="#5f0e27"/><rect x="299.6" y="48.5" width="3.2" height="3.2" fill="#511915"/><rect x="299.6" y="67.2" width="3.2" height="3.2" fill="#bd4a21"/><rect x="299.6" y="85.9" width="3.2" height="3.2" fill="#2d2d22"/><rect x="299.6" y="104.6" width="3.2" height="3.2" fill="#42c684"/><rect x="299.6" y="123.3" width="3.2" height="3.2" fill="#931b5e"/><rect x="299.6" y="142.0" width="3.2" height="3.2" fill="#53205a"/><rect x="299.6" y="160.7" width="3.2" height="3.2" fill="#4b4b75"/><rect x="299.6" y="179.4" width="3.2" height="3.2" fill="#26261c"/><rect x="299.6" y="198.1" width="3.2" height="3.2" fill="#440c8e"/><rect x="299.6" y="216.8" width="3.2" height="3.2" fill="#0f0f9c"/><rect x="299.6" y="235.5" width="3.2" height="3.2" fill="#3b26b4"/><rect x="299.6" y="254.2" width="3.2" height="3.2" fill="#154adb"/><rect x="299.6" y="272.9" width="3.2" height="3.2" fill="#8e872e"/><rect x="299.6" y="291.6" width="3.2" height="3.2" fill="#0c0cae"/><rect x="299.6" y="310.3" width="3.2" height="3.2" fill="#92928a"/><rect x="299.6" y="329.0" width="3.2" height="3.2" fill="#e0abb3"/><rect x="299.6" y="347.7" width="3.2" height="3.2" fill="#2d8031"/><rect x="299.6" y="366.4" width="3.2" height="3.2" fill="#233816"/><rect x="299.6" y="385.1" width="3.2" height="3.2" fill="#0f4771"/><rect x="299.6" y="403.8" width="3.2" height="3.2" fill="#29160b"/><rect x="299.6" y="422.5" width="3.2" height="3.2" fill="#1a1629"/><rect x="299.6" y="441.2" width="3.2" height="3.2" fill="#90904a"/><rect x="299.6" y="459.9" width="3.2" height="3.2" fill="#0b0b9c"/><rect x="299.6" y="478.6" width="3.2" height="3.2" fill="#0b0b8a"/><rect x="307.4" y="39.9" width="3.2" height="3.2" fill="#04040e"/><rect x="307.4" y="58.6" width="3.2" height="3.2" fill="#280a19"/><rect x="307.4" y="77.4" width="3.2" height="3.2" fill="#0f0803"/><rect x="307.4" y="96.0" width="3.2" height="3.2" fill="#070707"/><rect x="307.4" y="114.7" width="3.2" height="3.2" fill="#29160b"/><rect x="307.4" y="133.5" width="3.2" height="3.2" fill="#092a20"/><rect x="307.4" y="152.2" width="3.2" height="3.2" fill="#888888"/><rect x="307.4" y="170.9" width="3.2" height="3.2" fill="#833214"/><rect x="307.4" y="189.6" width="3.2" height="3.2" fill="#040404"/><rect x="307.4" y="208.3" width="3.2" height="3.2" fill="#0b0b0b"/><rect x="307.4" y="227.0" width="3.2" height="3.2" fill="#070707"/><rect x="307.4" y="245.7" width="3.2" height="3.2" fill="#070707"/><rect x="307.4" y="264.3" width="3.2" height="3.2" fill="#0b0b05"/><rect x="307.4" y="283.0" width="3.2" height="3.2" fill="#151515"/><rect x="307.4" y="301.7" width="3.2" height="3.2" fill="#9a5633"/><rect x="307.4" y="320.4" width="3.2" height="3.2" fill="#ae672d"/><rect x="307.4" y="339.1" width="3.2" height="3.2" fill="#b17844"/><rect x="307.4" y="357.8" width="3.2" height="3.2" fill="#0b0b0b"/><rect x="307.4" y="376.5" width="3.2" height="3.2" fill="#04040e"/><rect x="307.4" y="413.9" width="3.2" height="3.2" fill="#070707"/><rect x="307.4" y="432.6" width="3.2" height="3.2" fill="#070707"/><rect x="307.4" y="451.3" width="3.2" height="3.2" fill="#070707"/><rect x="307.4" y="470.0" width="3.2" height="3.2" fill="#040416"/><rect x="318.3" y="29.8" width="3.2" height="3.2" fill="#04040e"/><rect x="318.3" y="48.5" width="3.2" height="3.2" fill="#0b0b0b"/><rect x="318.3" y="67.2" width="3.2" height="3.2" fill="#8b6658"/><rect x="318.3" y="85.9" width="3.2" height="3.2" fill="#0a113f"/><rect x="318.3" y="104.6" width="3.2" height="3.2" fill="#3e3ea5"/><rect x="318.3" y="123.3" width="3.2" height="3.2" fill="#50112c"/><rect x="318.3" y="142.0" width="3.2" height="3.2" fill="#0b0817"/><rect x="318.3" y="160.7" width="3.2" height="3.2" fill="#b18024"/><rect x="318.3" y="179.4" width="3.2" height="3.2" fill="#895656"/><rect x="318.3" y="198.1" width="3.2" height="3.2" fill="#98425b"/><rect x="318.3" y="216.8" width="3.2" height="3.2" fill="#90904a"/><rect x="318.3" y="235.5" width="3.2" height="3.2" fill="#126d39"/><rect x="318.3" y="254.2" width="3.2" height="3.2" fill="#202025"/><rect x="318.3" y="272.9" width="3.2" height="3.2" fill="#b18024"/><rect x="318.3" y="291.6" width="3.2" height="3.2" fill="#1e0b4d"/><rect x="318.3" y="310.3" width="3.2" height="3.2" fill="#ac5722"/><rect x="318.3" y="329.0" width="3.2" height="3.2" fill="#14092d"/><rect x="318.3" y="347.7" width="3.2" height="3.2" fill="#1d5519"/><rect x="318.3" y="366.4" width="3.2" height="3.2" fill="#010101"/><rect x="318.3" y="385.1" width="3.2" height="3.2" fill="#080d6a"/><rect x="318.3" y="403.8" width="3.2" height="3.2" fill="#974122"/><rect x="318.3" y="422.5" width="3.2" height="3.2" fill="#040404"/><rect x="318.3" y="441.2" width="3.2" height="3.2" fill="#0c2a17"/><rect x="318.3" y="459.9" width="3.2" height="3.2" fill="#09094c"/><rect x="318.3" y="478.6" width="3.2" height="3.2" fill="#050531"/><rect x="326.1" y="58.6" width="3.2" height="3.2" fill="#60162d"/><rect x="326.1" y="77.4" width="3.2" height="3.2" fill="#151515"/><rect x="326.1" y="96.0" width="3.2" height="3.2" fill="#182b26"/><rect x="326.1" y="114.7" width="3.2" height="3.2" fill="#10405a"/><rect x="326.1" y="133.5" width="3.2" height="3.2" fill="#89553d"/><rect x="326.1" y="152.2" width="3.2" height="3.2" fill="#aabbbb"/><rect x="326.1" y="170.9" width="3.2" height="3.2" fill="#26260d"/><rect x="326.1" y="189.6" width="3.2" height="3.2" fill="#241b0b"/><rect x="326.1" y="208.3" width="3.2" height="3.2" fill="#1a1a12"/><rect x="326.1" y="227.0" width="3.2" height="3.2" fill="#05051b"/><rect x="326.1" y="245.7" width="3.2" height="3.2" fill="#262626"/><rect x="326.1" y="264.3" width="3.2" height="3.2" fill="#653d28"/><rect x="326.1" y="283.0" width="3.2" height="3.2" fill="#5b5b5b"/><rect x="326.1" y="320.4" width="3.2" height="3.2" fill="#13050b"/><rect x="326.1" y="339.1" width="3.2" height="3.2" fill="#6c6c6c"/><rect x="326.1" y="357.8" width="3.2" height="3.2" fill="#196e45"/><rect x="326.1" y="376.5" width="3.2" height="3.2" fill="#050b17"/><rect x="326.1" y="413.9" width="3.2" height="3.2" fill="#0b0b0b"/><rect x="326.1" y="470.0" width="3.2" height="3.2" fill="#040416"/><rect x="337.0" y="29.8" width="3.2" height="3.2" fill="#040412"/><rect x="337.0" y="67.2" width="3.2" height="3.2" fill="#206652"/><rect x="337.0" y="85.9" width="3.2" height="3.2" fill="#21108c"/><rect x="337.0" y="104.6" width="3.2" height="3.2" fill="#8080a8"/><rect x="337.0" y="123.3" width="3.2" height="3.2" fill="#95245f"/><rect x="337.0" y="142.0" width="3.2" height="3.2" fill="#0c2a0f"/><rect x="337.0" y="160.7" width="3.2" height="3.2" fill="#722642"/><rect x="337.0" y="179.4" width="3.2" height="3.2" fill="#2a1720"/><rect x="337.0" y="198.1" width="3.2" height="3.2" fill="#7c7c28"/><rect x="337.0" y="216.8" width="3.2" height="3.2" fill="#dd98a0"/><rect x="337.0" y="235.5" width="3.2" height="3.2" fill="#38813d"/><rect x="337.0" y="254.2" width="3.2" height="3.2" fill="#521267"/><rect x="337.0" y="272.9" width="3.2" height="3.2" fill="#721e72"/><rect x="337.0" y="291.6" width="3.2" height="3.2" fill="#7d7d31"/><rect x="337.0" y="310.3" width="3.2" height="3.2" fill="#6f8e3d"/><rect x="337.0" y="329.0" width="3.2" height="3.2" fill="#2a1725"/><rect x="337.0" y="347.7" width="3.2" height="3.2" fill="#b16aa9"/><rect x="337.0" y="366.4" width="3.2" height="3.2" fill="#a5a56f"/><rect x="337.0" y="385.1" width="3.2" height="3.2" fill="#090938"/><rect x="337.0" y="403.8" width="3.2" height="3.2" fill="#a62920"/><rect x="337.0" y="441.2" width="3.2" height="3.2" fill="#0a1a28"/><rect x="337.0" y="459.9" width="3.2" height="3.2" fill="#0a0a69"/><rect x="337.0" y="478.6" width="3.2" height="3.2" fill="#05052b"/><rect x="344.8" y="58.6" width="3.2" height="3.2" fill="#330811"/><rect x="344.8" y="77.4" width="3.2" height="3.2" fill="#202020"/><rect x="344.8" y="96.0" width="3.2" height="3.2" fill="#070707"/><rect x="344.8" y="114.7" width="3.2" height="3.2" fill="#0d3f5a"/><rect x="344.8" y="133.5" width="3.2" height="3.2" fill="#3b3b3b"/><rect x="344.8" y="152.2" width="3.2" height="3.2" fill="#05070e"/><rect x="344.8" y="170.9" width="3.2" height="3.2" fill="#04040e"/><rect x="344.8" y="189.6" width="3.2" height="3.2" fill="#0d1133"/><rect x="344.8" y="208.3" width="3.2" height="3.2" fill="#0b0b0b"/><rect x="344.8" y="227.0" width="3.2" height="3.2" fill="#9f7f3e"/><rect x="344.8" y="245.7" width="3.2" height="3.2" fill="#0a1039"/><rect x="344.8" y="264.3" width="3.2" height="3.2" fill="#2b2010"/><rect x="344.8" y="283.0" width="3.2" height="3.2" fill="#b48b74"/><rect x="344.8" y="301.7" width="3.2" height="3.2" fill="#0c0f09"/><rect x="344.8" y="320.4" width="3.2" height="3.2" fill="#0e050b"/><rect x="344.8" y="339.1" width="3.2" height="3.2" fill="#9c9c9c"/><rect x="344.8" y="357.8" width="3.2" height="3.2" fill="#0b0b0b"/><rect x="344.8" y="376.5" width="3.2" height="3.2" fill="#473b15"/><rect x="344.8" y="395.2" width="3.2" height="3.2" fill="#7b7422"/><rect x="344.8" y="413.9" width="3.2" height="3.2" fill="#4a4a3e"/><rect x="344.8" y="451.3" width="3.2" height="3.2" fill="#040412"/><rect x="344.8" y="470.0" width="3.2" height="3.2" fill="#040412"/><rect x="355.7" y="29.8" width="3.2" height="3.2" fill="#0b0512"/><rect x="355.7" y="48.5" width="3.2" height="3.2" fill="#0a0507"/><rect x="355.7" y="67.2" width="3.2" height="3.2" fill="#785436"/><rect x="355.7" y="85.9" width="3.2" height="3.2" fill="#6a6a19"/><rect x="355.7" y="104.6" width="3.2" height="3.2" fill="#66b466"/><rect x="355.7" y="123.3" width="3.2" height="3.2" fill="#2c2c1e"/><rect x="355.7" y="142.0" width="3.2" height="3.2" fill="#441558"/><rect x="355.7" y="160.7" width="3.2" height="3.2" fill="#702014"/><rect x="355.7" y="179.4" width="3.2" height="3.2" fill="#792118"/><rect x="355.7" y="198.1" width="3.2" height="3.2" fill="#27561e"/><rect x="355.7" y="216.8" width="3.2" height="3.2" fill="#c4812d"/><rect x="355.7" y="235.5" width="3.2" height="3.2" fill="#0d3121"/><rect x="355.7" y="254.2" width="3.2" height="3.2" fill="#1c0608"/><rect x="355.7" y="272.9" width="3.2" height="3.2" fill="#931e37"/><rect x="355.7" y="291.6" width="3.2" height="3.2" fill="#4d6147"/><rect x="355.7" y="310.3" width="3.2" height="3.2" fill="#0d3014"/><rect x="355.7" y="329.0" width="3.2" height="3.2" fill="#262626"/><rect x="355.7" y="347.7" width="3.2" height="3.2" fill="#227747"/><rect x="355.7" y="366.4" width="3.2" height="3.2" fill="#8f8f23"/><rect x="355.7" y="385.1" width="3.2" height="3.2" fill="#262618"/><rect x="355.7" y="403.8" width="3.2" height="3.2" fill="#14764c"/><rect x="355.7" y="422.5" width="3.2" height="3.2" fill="#20200c"/><rect x="355.7" y="441.2" width="3.2" height="3.2" fill="#0c0cae"/><rect x="355.7" y="459.9" width="3.2" height="3.2" fill="#0909ad"/><rect x="355.7" y="478.6" width="3.2" height="3.2" fill="#09094c"/><rect x="363.5" y="39.9" width="3.2" height="3.2" fill="#010101"/><rect x="363.5" y="58.6" width="3.2" height="3.2" fill="#13050f"/><rect x="363.5" y="77.4" width="3.2" height="3.2" fill="#13050b"/><rect x="363.5" y="96.0" width="3.2" height="3.2" fill="#151523"/><rect x="363.5" y="114.7" width="3.2" height="3.2" fill="#0e2c6e"/><rect x="363.5" y="133.5" width="3.2" height="3.2" fill="#3b3b35"/><rect x="363.5" y="152.2" width="3.2" height="3.2" fill="#25201c"/><rect x="363.5" y="170.9" width="3.2" height="3.2" fill="#2b2010"/><rect x="363.5" y="189.6" width="3.2" height="3.2" fill="#040412"/><rect x="363.5" y="208.3" width="3.2" height="3.2" fill="#0f0805"/><rect x="363.5" y="227.0" width="3.2" height="3.2" fill="#69622d"/><rect x="363.5" y="245.7" width="3.2" height="3.2" fill="#280a19"/><rect x="363.5" y="264.3" width="3.2" height="3.2" fill="#542f14"/><rect x="363.5" y="283.0" width="3.2" height="3.2" fill="#919157"/><rect x="363.5" y="301.7" width="3.2" height="3.2" fill="#1e150a"/><rect x="363.5" y="320.4" width="3.2" height="3.2" fill="#070707"/><rect x="363.5" y="339.1" width="3.2" height="3.2" fill="#101006"/><rect x="363.5" y="357.8" width="3.2" height="3.2" fill="#494337"/><rect x="363.5" y="376.5" width="3.2" height="3.2" fill="#16162e"/><rect x="363.5" y="413.9" width="3.2" height="3.2" fill="#0a3126"/><rect x="363.5" y="432.6" width="3.2" height="3.2" fill="#0b0b08"/><rect x="363.5" y="451.3" width="3.2" height="3.2" fill="#0c0c18"/><rect x="363.5" y="470.0" width="3.2" height="3.2" fill="#050520"/><rect x="374.4" y="29.8" width="3.2" height="3.2" fill="#80112e"/><rect x="374.4" y="48.5" width="3.2" height="3.2" fill="#b6141a"/><rect x="374.4" y="67.2" width="3.2" height="3.2" fill="#774d30"/><rect x="374.4" y="85.9" width="3.2" height="3.2" fill="#6f0f28"/><rect x="374.4" y="104.6" width="3.2" height="3.2" fill="#3d501e"/><rect x="374.4" y="123.3" width="3.2" height="3.2" fill="#701840"/><rect x="374.4" y="142.0" width="3.2" height="3.2" fill="#1f1247"/><rect x="374.4" y="160.7" width="3.2" height="3.2" fill="#9d7625"/><rect x="374.4" y="179.4" width="3.2" height="3.2" fill="#070707"/><rect x="374.4" y="198.1" width="3.2" height="3.2" fill="#346621"/><rect x="374.4" y="216.8" width="3.2" height="3.2" fill="#0f2a13"/><rect x="374.4" y="235.5" width="3.2" height="3.2" fill="#caa751"/><rect x="374.4" y="254.2" width="3.2" height="3.2" fill="#c6932f"/><rect x="374.4" y="272.9" width="3.2" height="3.2" fill="#1b4613"/><rect x="374.4" y="291.6" width="3.2" height="3.2" fill="#500e3d"/><rect x="374.4" y="310.3" width="3.2" height="3.2" fill="#04040e"/><rect x="374.4" y="329.0" width="3.2" height="3.2" fill="#1f1b1f"/><rect x="374.4" y="347.7" width="3.2" height="3.2" fill="#7d8525"/><rect x="374.4" y="366.4" width="3.2" height="3.2" fill="#080826"/><rect x="374.4" y="385.1" width="3.2" height="3.2" fill="#1c251c"/><rect x="374.4" y="403.8" width="3.2" height="3.2" fill="#0f3e28"/><rect x="374.4" y="422.5" width="3.2" height="3.2" fill="#161f16"/><rect x="374.4" y="441.2" width="3.2" height="3.2" fill="#821682"/><rect x="374.4" y="459.9" width="3.2" height="3.2" fill="#541c80"/><rect x="374.4" y="478.6" width="3.2" height="3.2" fill="#090945"/><rect x="382.2" y="39.9" width="3.2" height="3.2" fill="#120307"/><rect x="382.2" y="58.6" width="3.2" height="3.2" fill="#270714"/><rect x="382.2" y="77.4" width="3.2" height="3.2" fill="#100d33"/><rect x="382.2" y="96.0" width="3.2" height="3.2" fill="#13050b"/><rect x="382.2" y="114.7" width="3.2" height="3.2" fill="#270714"/><rect x="382.2" y="133.5" width="3.2" height="3.2" fill="#110d4d"/><rect x="382.2" y="152.2" width="3.2" height="3.2" fill="#151515"/><rect x="382.2" y="170.9" width="3.2" height="3.2" fill="#543515"/><rect x="382.2" y="227.0" width="3.2" height="3.2" fill="#0b0b08"/><rect x="382.2" y="245.7" width="3.2" height="3.2" fill="#04040e"/><rect x="382.2" y="264.3" width="3.2" height="3.2" fill="#26260d"/><rect x="382.2" y="283.0" width="3.2" height="3.2" fill="#56431a"/><rect x="382.2" y="301.7" width="3.2" height="3.2" fill="#2b2614"/><rect x="382.2" y="320.4" width="3.2" height="3.2" fill="#2a200d"/><rect x="382.2" y="339.1" width="3.2" height="3.2" fill="#595926"/><rect x="382.2" y="376.5" width="3.2" height="3.2" fill="#080817"/><rect x="382.2" y="395.2" width="3.2" height="3.2" fill="#070707"/><rect x="382.2" y="413.9" width="3.2" height="3.2" fill="#040416"/><rect x="382.2" y="432.6" width="3.2" height="3.2" fill="#262614"/><rect x="382.2" y="451.3" width="3.2" height="3.2" fill="#190d3a"/><rect x="382.2" y="470.0" width="3.2" height="3.2" fill="#090938"/><rect x="393.1" y="29.8" width="3.2" height="3.2" fill="#6f0f2d"/><rect x="393.1" y="48.5" width="3.2" height="3.2" fill="#a31322"/><rect x="393.1" y="67.2" width="3.2" height="3.2" fill="#33331f"/><rect x="393.1" y="85.9" width="3.2" height="3.2" fill="#86461a"/><rect x="393.1" y="104.6" width="3.2" height="3.2" fill="#206d18"/><rect x="393.1" y="123.3" width="3.2" height="3.2" fill="#1f651b"/><rect x="393.1" y="142.0" width="3.2" height="3.2" fill="#223222"/><rect x="393.1" y="160.7" width="3.2" height="3.2" fill="#b9301e"/><rect x="393.1" y="179.4" width="3.2" height="3.2" fill="#0e1154"/><rect x="393.1" y="198.1" width="3.2" height="3.2" fill="#3fb163"/><rect x="393.1" y="216.8" width="3.2" height="3.2" fill="#0c1b6c"/><rect x="393.1" y="235.5" width="3.2" height="3.2" fill="#91122a"/><rect x="393.1" y="254.2" width="3.2" height="3.2" fill="#911235"/><rect x="393.1" y="272.9" width="3.2" height="3.2" fill="#1caf77"/><rect x="393.1" y="291.6" width="3.2" height="3.2" fill="#136e60"/><rect x="393.1" y="310.3" width="3.2" height="3.2" fill="#94281f"/><rect x="393.1" y="329.0" width="3.2" height="3.2" fill="#314f37"/><rect x="393.1" y="347.7" width="3.2" height="3.2" fill="#61611f"/><rect x="393.1" y="366.4" width="3.2" height="3.2" fill="#a6291c"/><rect x="393.1" y="385.1" width="3.2" height="3.2" fill="#0b0b0b"/><rect x="393.1" y="403.8" width="3.2" height="3.2" fill="#410b0f"/><rect x="393.1" y="422.5" width="3.2" height="3.2" fill="#942338"/><rect x="393.1" y="441.2" width="3.2" height="3.2" fill="#c7c7c7"/><rect x="393.1" y="459.9" width="3.2" height="3.2" fill="#340b24"/><rect x="393.1" y="478.6" width="3.2" height="3.2" fill="#0b0b9c"/><rect x="400.9" y="39.9" width="3.2" height="3.2" fill="#13050b"/><rect x="400.9" y="58.6" width="3.2" height="3.2" fill="#410c20"/><rect x="400.9" y="77.4" width="3.2" height="3.2" fill="#0f080b"/><rect x="400.9" y="96.0" width="3.2" height="3.2" fill="#1a1a1a"/><rect x="400.9" y="114.7" width="3.2" height="3.2" fill="#151515"/><rect x="400.9" y="133.5" width="3.2" height="3.2" fill="#1a1a1a"/><rect x="400.9" y="152.2" width="3.2" height="3.2" fill="#7b742b"/><rect x="400.9" y="170.9" width="3.2" height="3.2" fill="#553c1e"/><rect x="400.9" y="189.6" width="3.2" height="3.2" fill="#010101"/><rect x="400.9" y="208.3" width="3.2" height="3.2" fill="#473b18"/><rect x="400.9" y="227.0" width="3.2" height="3.2" fill="#1a1a16"/><rect x="400.9" y="264.3" width="3.2" height="3.2" fill="#070707"/><rect x="400.9" y="283.0" width="3.2" height="3.2" fill="#0b0b0b"/><rect x="400.9" y="339.1" width="3.2" height="3.2" fill="#58511c"/><rect x="400.9" y="376.5" width="3.2" height="3.2" fill="#1a1623"/><rect x="400.9" y="395.2" width="3.2" height="3.2" fill="#0b0b0b"/><rect x="400.9" y="413.9" width="3.2" height="3.2" fill="#101006"/><rect x="400.9" y="432.6" width="3.2" height="3.2" fill="#5b5b5b"/><rect x="400.9" y="451.3" width="3.2" height="3.2" fill="#0c093f"/><rect x="400.9" y="470.0" width="3.2" height="3.2" fill="#080832"/><rect x="411.8" y="29.8" width="3.2" height="3.2" fill="#270714"/><rect x="411.8" y="48.5" width="3.2" height="3.2" fill="#0a0507"/><rect x="411.8" y="67.2" width="3.2" height="3.2" fill="#701b13"/><rect x="411.8" y="85.9" width="3.2" height="3.2" fill="#911912"/><rect x="411.8" y="104.6" width="3.2" height="3.2" fill="#07070b"/><rect x="411.8" y="123.3" width="3.2" height="3.2" fill="#2c2c15"/><rect x="411.8" y="142.0" width="3.2" height="3.2" fill="#1d2c26"/><rect x="411.8" y="160.7" width="3.2" height="3.2" fill="#0f553b"/><rect x="411.8" y="179.4" width="3.2" height="3.2" fill="#060f0f"/><rect x="411.8" y="198.1" width="3.2" height="3.2" fill="#812115"/><rect x="411.8" y="216.8" width="3.2" height="3.2" fill="#801711"/><rect x="411.8" y="235.5" width="3.2" height="3.2" fill="#a62f19"/><rect x="411.8" y="254.2" width="3.2" height="3.2" fill="#340e0e"/><rect x="411.8" y="272.9" width="3.2" height="3.2" fill="#a94218"/><rect x="411.8" y="291.6" width="3.2" height="3.2" fill="#911515"/><rect x="411.8" y="310.3" width="3.2" height="3.2" fill="#262610"/><rect x="411.8" y="329.0" width="3.2" height="3.2" fill="#80112e"/><rect x="411.8" y="347.7" width="3.2" height="3.2" fill="#3fb279"/><rect x="411.8" y="366.4" width="3.2" height="3.2" fill="#6c6c65"/><rect x="411.8" y="385.1" width="3.2" height="3.2" fill="#21761d"/><rect x="411.8" y="403.8" width="3.2" height="3.2" fill="#5e0e14"/><rect x="411.8" y="422.5" width="3.2" height="3.2" fill="#0b0b0b"/><rect x="411.8" y="441.2" width="3.2" height="3.2" fill="#b18020"/><rect x="411.8" y="459.9" width="3.2" height="3.2" fill="#360c56"/><rect x="411.8" y="478.6" width="3.2" height="3.2" fill="#41080e"/><rect x="419.6" y="39.9" width="3.2" height="3.2" fill="#1c060f"/><rect x="419.6" y="58.6" width="3.2" height="3.2" fill="#270714"/><rect x="419.6" y="77.4" width="3.2" height="3.2" fill="#0b0b05"/><rect x="419.6" y="96.0" width="3.2" height="3.2" fill="#070707"/><rect x="419.6" y="133.5" width="3.2" height="3.2" fill="#0b0b0b"/><rect x="419.6" y="152.2" width="3.2" height="3.2" fill="#6b6b33"/><rect x="419.6" y="170.9" width="3.2" height="3.2" fill="#262610"/><rect x="419.6" y="189.6" width="3.2" height="3.2" fill="#0b0b0b"/><rect x="419.6" y="208.3" width="3.2" height="3.2" fill="#262614"/><rect x="419.6" y="227.0" width="3.2" height="3.2" fill="#262614"/><rect x="419.6" y="245.7" width="3.2" height="3.2" fill="#101009"/><rect x="419.6" y="264.3" width="3.2" height="3.2" fill="#0f0b06"/><rect x="419.6" y="283.0" width="3.2" height="3.2" fill="#0b0b08"/><rect x="419.6" y="320.4" width="3.2" height="3.2" fill="#262618"/><rect x="419.6" y="339.1" width="3.2" height="3.2" fill="#0b0b08"/><rect x="419.6" y="357.8" width="3.2" height="3.2" fill="#1a1a1a"/><rect x="419.6" y="395.2" width="3.2" height="3.2" fill="#0b0b05"/><rect x="419.6" y="413.9" width="3.2" height="3.2" fill="#070707"/><rect x="419.6" y="432.6" width="3.2" height="3.2" fill="#110a53"/><rect x="419.6" y="451.3" width="3.2" height="3.2" fill="#0d094c"/><rect x="419.6" y="470.0" width="3.2" height="3.2" fill="#050526"/><rect x="430.5" y="29.8" width="3.2" height="3.2" fill="#1c060f"/><rect x="430.5" y="48.5" width="3.2" height="3.2" fill="#5e0e14"/><rect x="430.5" y="67.2" width="3.2" height="3.2" fill="#9a1515"/><rect x="430.5" y="85.9" width="3.2" height="3.2" fill="#040416"/><rect x="430.5" y="104.6" width="3.2" height="3.2" fill="#0f3e2d"/><rect x="430.5" y="123.3" width="3.2" height="3.2" fill="#942d18"/><rect x="430.5" y="142.0" width="3.2" height="3.2" fill="#a94237"/><rect x="430.5" y="160.7" width="3.2" height="3.2" fill="#130805"/><rect x="430.5" y="179.4" width="3.2" height="3.2" fill="#040704"/><rect x="430.5" y="198.1" width="3.2" height="3.2" fill="#116427"/><rect x="430.5" y="216.8" width="3.2" height="3.2" fill="#367831"/><rect x="430.5" y="235.5" width="3.2" height="3.2" fill="#528b27"/><rect x="430.5" y="254.2" width="3.2" height="3.2" fill="#427824"/><rect x="430.5" y="272.9" width="3.2" height="3.2" fill="#157f41"/><rect x="430.5" y="291.6" width="3.2" height="3.2" fill="#63a050"/><rect x="430.5" y="310.3" width="3.2" height="3.2" fill="#0d337f"/><rect x="430.5" y="329.0" width="3.2" height="3.2" fill="#75bd2f"/><rect x="430.5" y="347.7" width="3.2" height="3.2" fill="#4f0d13"/><rect x="430.5" y="366.4" width="3.2" height="3.2" fill="#7f1017"/><rect x="430.5" y="385.1" width="3.2" height="3.2" fill="#5e0a10"/><rect x="430.5" y="403.8" width="3.2" height="3.2" fill="#33070a"/><rect x="430.5" y="422.5" width="3.2" height="3.2" fill="#16609e"/><rect x="430.5" y="441.2" width="3.2" height="3.2" fill="#4d47cc"/><rect x="430.5" y="459.9" width="3.2" height="3.2" fill="#0e0e6a"/><rect x="430.5" y="478.6" width="3.2" height="3.2" fill="#0a0a69"/><rect x="438.3" y="39.9" width="3.2" height="3.2" fill="#120307"/><rect x="438.3" y="58.6" width="3.2" height="3.2" fill="#340b1a"/><rect x="438.3" y="77.4" width="3.2" height="3.2" fill="#5f0e22"/><rect x="438.3" y="96.0" width="3.2" height="3.2" fill="#110d3f"/><rect x="438.3" y="114.7" width="3.2" height="3.2" fill="#115d43"/><rect x="438.3" y="133.5" width="3.2" height="3.2" fill="#262614"/><rect x="438.3" y="152.2" width="3.2" height="3.2" fill="#0b0b0b"/><rect x="438.3" y="189.6" width="3.2" height="3.2" fill="#08080e"/><rect x="438.3" y="208.3" width="3.2" height="3.2" fill="#070707"/><rect x="438.3" y="227.0" width="3.2" height="3.2" fill="#070707"/><rect x="438.3" y="245.7" width="3.2" height="3.2" fill="#0b0b0b"/><rect x="438.3" y="264.3" width="3.2" height="3.2" fill="#070705"/><rect x="438.3" y="283.0" width="3.2" height="3.2" fill="#1a1a12"/><rect x="438.3" y="301.7" width="3.2" height="3.2" fill="#132a10"/><rect x="438.3" y="320.4" width="3.2" height="3.2" fill="#0b0b0b"/><rect x="438.3" y="339.1" width="3.2" height="3.2" fill="#6a6a20"/><rect x="438.3" y="376.5" width="3.2" height="3.2" fill="#07070b"/><rect x="438.3" y="395.2" width="3.2" height="3.2" fill="#0b0b0b"/><rect x="438.3" y="413.9" width="3.2" height="3.2" fill="#070702"/><rect x="438.3" y="432.6" width="3.2" height="3.2" fill="#bcbcbc"/><rect x="438.3" y="451.3" width="3.2" height="3.2" fill="#594c59"/><rect x="438.3" y="470.0" width="3.2" height="3.2" fill="#090953"/><rect x="449.2" y="29.8" width="3.2" height="3.2" fill="#270714"/><rect x="449.2" y="48.5" width="3.2" height="3.2" fill="#4f0d13"/><rect x="449.2" y="67.2" width="3.2" height="3.2" fill="#901118"/><rect x="449.2" y="85.9" width="3.2" height="3.2" fill="#6a634f"/><rect x="449.2" y="104.6" width="3.2" height="3.2" fill="#511919"/><rect x="449.2" y="123.3" width="3.2" height="3.2" fill="#cfbdbd"/><rect x="449.2" y="142.0" width="3.2" height="3.2" fill="#c996a7"/><rect x="449.2" y="160.7" width="3.2" height="3.2" fill="#ad5f30"/><rect x="449.2" y="179.4" width="3.2" height="3.2" fill="#6a6a20"/><rect x="449.2" y="198.1" width="3.2" height="3.2" fill="#510c6e"/><rect x="449.2" y="216.8" width="3.2" height="3.2" fill="#2e296f"/><rect x="449.2" y="235.5" width="3.2" height="3.2" fill="#95b756"/><rect x="449.2" y="254.2" width="3.2" height="3.2" fill="#5c7220"/><rect x="449.2" y="272.9" width="3.2" height="3.2" fill="#7d8525"/><rect x="449.2" y="291.6" width="3.2" height="3.2" fill="#3d4f17"/><rect x="449.2" y="310.3" width="3.2" height="3.2" fill="#504343"/><rect x="449.2" y="329.0" width="3.2" height="3.2" fill="#262626"/><rect x="449.2" y="347.7" width="3.2" height="3.2" fill="#294017"/><rect x="449.2" y="366.4" width="3.2" height="3.2" fill="#38571f"/><rect x="449.2" y="385.1" width="3.2" height="3.2" fill="#091409"/><rect x="449.2" y="403.8" width="3.2" height="3.2" fill="#202020"/><rect x="449.2" y="422.5" width="3.2" height="3.2" fill="#262614"/><rect x="449.2" y="441.2" width="3.2" height="3.2" fill="#dddddd"/><rect x="449.2" y="459.9" width="3.2" height="3.2" fill="#635c79"/><rect x="449.2" y="478.6" width="3.2" height="3.2" fill="#0a0a69"/><rect x="457.0" y="39.9" width="3.2" height="3.2" fill="#b71438"/><rect x="457.0" y="58.6" width="3.2" height="3.2" fill="#721e72"/><rect x="457.0" y="77.4" width="3.2" height="3.2" fill="#3c319a"/><rect x="457.0" y="96.0" width="3.2" height="3.2" fill="#090945"/><rect x="457.0" y="114.7" width="3.2" height="3.2" fill="#040412"/><rect x="457.0" y="133.5" width="3.2" height="3.2" fill="#160e5c"/><rect x="457.0" y="152.2" width="3.2" height="3.2" fill="#05070a"/><rect x="457.0" y="189.6" width="3.2" height="3.2" fill="#04040e"/><rect x="457.0" y="208.3" width="3.2" height="3.2" fill="#080812"/><rect x="457.0" y="227.0" width="3.2" height="3.2" fill="#070707"/><rect x="457.0" y="245.7" width="3.2" height="3.2" fill="#3b3b3b"/><rect x="457.0" y="301.7" width="3.2" height="3.2" fill="#143114"/><rect x="457.0" y="320.4" width="3.2" height="3.2" fill="#0b0b0b"/><rect x="457.0" y="339.1" width="3.2" height="3.2" fill="#1a1a1a"/><rect x="457.0" y="357.8" width="3.2" height="3.2" fill="#0b0b0b"/><rect x="457.0" y="376.5" width="3.2" height="3.2" fill="#05070e"/><rect x="457.0" y="395.2" width="3.2" height="3.2" fill="#a7a7a7"/><rect x="457.0" y="413.9" width="3.2" height="3.2" fill="#11112d"/><rect x="457.0" y="432.6" width="3.2" height="3.2" fill="#2e297f"/><rect x="457.0" y="451.3" width="3.2" height="3.2" fill="#151123"/><rect x="457.0" y="470.0" width="3.2" height="3.2" fill="#130f9d"/><rect x="467.9" y="29.8" width="3.2" height="3.2" fill="#0f0517"/><rect x="467.9" y="48.5" width="3.2" height="3.2" fill="#c11d2f"/><rect x="467.9" y="67.2" width="3.2" height="3.2" fill="#604c59"/><rect x="467.9" y="85.9" width="3.2" height="3.2" fill="#0e0505"/><rect x="467.9" y="104.6" width="3.2" height="3.2" fill="#0f09ae"/><rect x="467.9" y="123.3" width="3.2" height="3.2" fill="#070707"/><rect x="467.9" y="142.0" width="3.2" height="3.2" fill="#521a32"/><rect x="467.9" y="160.7" width="3.2" height="3.2" fill="#170505"/><rect x="467.9" y="179.4" width="3.2" height="3.2" fill="#5e0a10"/><rect x="467.9" y="198.1" width="3.2" height="3.2" fill="#5e0a10"/><rect x="467.9" y="216.8" width="3.2" height="3.2" fill="#511522"/><rect x="467.9" y="235.5" width="3.2" height="3.2" fill="#2211c3"/><rect x="467.9" y="254.2" width="3.2" height="3.2" fill="#8770c2"/><rect x="467.9" y="272.9" width="3.2" height="3.2" fill="#2d13d6"/><rect x="467.9" y="291.6" width="3.2" height="3.2" fill="#33330f"/><rect x="467.9" y="310.3" width="3.2" height="3.2" fill="#0e3714"/><rect x="467.9" y="329.0" width="3.2" height="3.2" fill="#09094c"/><rect x="467.9" y="347.7" width="3.2" height="3.2" fill="#1029c4"/><rect x="467.9" y="366.4" width="3.2" height="3.2" fill="#8879c3"/><rect x="467.9" y="385.1" width="3.2" height="3.2" fill="#a7351e"/><rect x="467.9" y="403.8" width="3.2" height="3.2" fill="#09093e"/><rect x="467.9" y="422.5" width="3.2" height="3.2" fill="#1e0a39"/><rect x="467.9" y="441.2" width="3.2" height="3.2" fill="#5b4ebb"/><rect x="467.9" y="459.9" width="3.2" height="3.2" fill="#1919c3"/><rect x="467.9" y="478.6" width="3.2" height="3.2" fill="#0a0a5a"/><rect x="475.7" y="39.9" width="3.2" height="3.2" fill="#6f0f2d"/><rect x="475.7" y="58.6" width="3.2" height="3.2" fill="#2a0f56"/><rect x="475.7" y="77.4" width="3.2" height="3.2" fill="#160b7a"/><rect x="475.7" y="96.0" width="3.2" height="3.2" fill="#08051b"/><rect x="475.7" y="114.7" width="3.2" height="3.2" fill="#040416"/><rect x="475.7" y="133.5" width="3.2" height="3.2" fill="#080531"/><rect x="475.7" y="283.0" width="3.2" height="3.2" fill="#04040a"/><rect x="475.7" y="357.8" width="3.2" height="3.2" fill="#040412"/><rect x="475.7" y="376.5" width="3.2" height="3.2" fill="#05051b"/><rect x="475.7" y="395.2" width="3.2" height="3.2" fill="#05051b"/><rect x="475.7" y="413.9" width="3.2" height="3.2" fill="#05051b"/><rect x="475.7" y="432.6" width="3.2" height="3.2" fill="#150b63"/><rect x="475.7" y="451.3" width="3.2" height="3.2" fill="#05051b"/><rect x="475.7" y="470.0" width="3.2" height="3.2" fill="#180bd3"/><rect x="486.6" y="29.8" width="3.2" height="3.2" fill="#04040e"/><rect x="486.6" y="48.5" width="3.2" height="3.2" fill="#5f0e1d"/><rect x="486.6" y="67.2" width="3.2" height="3.2" fill="#17060b"/><rect x="486.6" y="85.9" width="3.2" height="3.2" fill="#040412"/><rect x="486.6" y="104.6" width="3.2" height="3.2" fill="#180732"/><rect x="486.6" y="123.3" width="3.2" height="3.2" fill="#41080e"/><rect x="486.6" y="142.0" width="3.2" height="3.2" fill="#170508"/><rect x="486.6" y="160.7" width="3.2" height="3.2" fill="#33070a"/><rect x="486.6" y="179.4" width="3.2" height="3.2" fill="#40080b"/><rect x="486.6" y="198.1" width="3.2" height="3.2" fill="#4f090f"/><rect x="486.6" y="216.8" width="3.2" height="3.2" fill="#500e3d"/><rect x="486.6" y="235.5" width="3.2" height="3.2" fill="#0909ad"/><rect x="486.6" y="254.2" width="3.2" height="3.2" fill="#430d50"/><rect x="486.6" y="272.9" width="3.2" height="3.2" fill="#370e8d"/><rect x="486.6" y="291.6" width="3.2" height="3.2" fill="#500d31"/><rect x="486.6" y="310.3" width="3.2" height="3.2" fill="#080638"/><rect x="486.6" y="329.0" width="3.2" height="3.2" fill="#05051b"/><rect x="486.6" y="347.7" width="3.2" height="3.2" fill="#0b0b93"/><rect x="486.6" y="366.4" width="3.2" height="3.2" fill="#510f67"/><rect x="486.6" y="385.1" width="3.2" height="3.2" fill="#340815"/><rect x="486.6" y="403.8" width="3.2" height="3.2" fill="#10093f"/><rect x="486.6" y="422.5" width="3.2" height="3.2" fill="#2b107c"/><rect x="486.6" y="441.2" width="3.2" height="3.2" fill="#2211b0"/><rect x="486.6" y="459.9" width="3.2" height="3.2" fill="#130cae"/><rect x="486.6" y="478.6" width="3.2" height="3.2" fill="#080531"/><rect x="494.5" y="40.2" width="12.5" height="2.6" fill="#0c043f"/><rect x="494.5" y="58.9" width="12.5" height="2.6" fill="#070229"/><rect x="494.5" y="77.7" width="12.5" height="2.6" fill="#02010d"/><rect x="494.5" y="96.3" width="12.5" height="2.6" fill="#02010a"/><rect x="494.5" y="115.0" width="12.5" height="2.6" fill="#010106"/><rect x="494.5" y="133.8" width="12.5" height="2.6" fill="#020107"/><rect x="494.5" y="152.4" width="12.5" height="2.6" fill="#020106"/><rect x="494.5" y="320.7" width="12.5" height="2.6" fill="#04030a"/><rect x="494.5" y="339.4" width="12.5" height="2.6" fill="#010103"/><rect x="494.5" y="358.1" width="12.5" height="2.6" fill="#090513"/><rect x="494.5" y="376.8" width="12.5" height="2.6" fill="#010103"/><rect x="494.5" y="395.5" width="12.5" height="2.6" fill="#02010a"/><rect x="494.5" y="432.9" width="12.5" height="2.6" fill="#0c042d"/><rect x="494.5" y="451.6" width="12.5" height="2.6" fill="#010106"/><rect x="494.5" y="470.3" width="12.5" height="2.6" fill="#0c0436"/></g>
<path d="M398.2 260.8A152.3 152.3 0 0 1 398.2 263.3M398.1 267.3A152.3 152.3 0 0 1 397.9 271.0M397.5 275.3A152.3 152.3 0 0 1 397.1 279.4M396.4 283.8A152.3 152.3 0 0 1 395.7 288.2M394.8 293.0A152.3 152.3 0 0 1 393.6 297.8M392.2 303.0A152.3 152.3 0 0 1 390.6 308.4M293.5 405.5A152.3 152.3 0 0 1 288.1 407.1M282.9 408.5A152.3 152.3 0 0 1 278.1 409.7M273.3 410.6A152.3 152.3 0 0 1 268.9 411.3M264.5 412.0A152.3 152.3 0 0 1 260.4 412.4M256.1 412.8A152.3 152.3 0 0 1 252.4 413.0M248.4 413.1A152.3 152.3 0 0 1 244.7 413.1M241.0 413.0A152.3 152.3 0 0 1 237.5 412.9M233.8 412.6A152.3 152.3 0 0 1 230.5 412.3M227.1 411.9A152.3 152.3 0 0 1 223.9 411.5M220.5 411.0A152.3 152.3 0 0 1 217.5 410.4M214.2 409.8A152.3 152.3 0 0 1 211.3 409.1M208.2 408.3A152.3 152.3 0 0 1 205.3 407.6M202.3 406.7A152.3 152.3 0 0 1 199.6 405.9M196.6 404.9A152.3 152.3 0 0 1 193.9 404.0M191.1 402.9A152.3 152.3 0 0 1 188.6 401.9M185.8 400.7A152.3 152.3 0 0 1 183.3 399.7M180.6 398.4A152.3 152.3 0 0 1 178.2 397.2M175.6 395.9A152.3 152.3 0 0 1 173.3 394.7M170.8 393.3A152.3 152.3 0 0 1 168.5 392.0M166.1 390.5A152.3 152.3 0 0 1 163.8 389.1M161.5 387.6A152.3 152.3 0 0 1 159.4 386.2M157.0 384.5A152.3 152.3 0 0 1 155.0 383.0M152.8 381.3A152.3 152.3 0 0 1 150.8 379.7M148.6 378.0A152.3 152.3 0 0 1 146.7 376.4M144.6 374.5A152.3 152.3 0 0 1 142.7 372.8M140.7 370.9A152.3 152.3 0 0 1 138.9 369.1M136.9 367.2A152.3 152.3 0 0 1 135.2 365.3M133.3 363.3A152.3 152.3 0 0 1 131.6 361.4M129.7 359.3A152.3 152.3 0 0 1 128.1 357.4M126.4 355.2A152.3 152.3 0 0 1 124.8 353.2M123.2 351.0A152.3 152.3 0 0 1 121.7 348.9M120.1 346.6A152.3 152.3 0 0 1 118.6 344.4M117.1 342.1A152.3 152.3 0 0 1 115.8 339.9M114.3 337.4A152.3 152.3 0 0 1 113.0 335.1M111.6 332.7A152.3 152.3 0 0 1 110.4 330.3M109.1 327.7A152.3 152.3 0 0 1 107.9 325.3M106.7 322.5A152.3 152.3 0 0 1 105.6 320.1M104.4 317.2A152.3 152.3 0 0 1 103.5 314.8M102.4 311.9A152.3 152.3 0 0 1 101.5 309.1M100.5 306.2A152.3 152.3 0 0 1 99.7 303.4M98.9 300.5A152.3 152.3 0 0 1 98.1 297.6M97.4 294.4A152.3 152.3 0 0 1 96.7 291.4M96.1 288.2A152.3 152.3 0 0 1 95.6 285.1M95.0 281.7A152.3 152.3 0 0 1 94.6 278.6M94.3 275.0A152.3 152.3 0 0 1 94.0 271.7M93.8 268.1A152.3 152.3 0 0 1 93.6 264.5M93.6 260.8A152.3 152.3 0 0 1 93.6 257.1M93.8 253.1A152.3 152.3 0 0 1 94.0 249.2M94.4 245.0A152.3 152.3 0 0 1 94.9 240.8M95.6 236.3A152.3 152.3 0 0 1 96.4 231.9M97.4 227.1A152.3 152.3 0 0 1 98.6 222.2M100.1 216.8A152.3 152.3 0 0 1 101.8 211.5M196.6 116.7A152.3 152.3 0 0 1 201.9 115.0M207.3 113.5A152.3 152.3 0 0 1 212.2 112.3M217.0 111.3A152.3 152.3 0 0 1 221.4 110.5M225.9 109.8A152.3 152.3 0 0 1 230.1 109.3M234.3 108.9A152.3 152.3 0 0 1 238.2 108.7M242.2 108.5A152.3 152.3 0 0 1 245.9 108.5M249.6 108.5A152.3 152.3 0 0 1 253.2 108.7M256.8 108.9A152.3 152.3 0 0 1 260.1 109.2M263.7 109.5A152.3 152.3 0 0 1 266.8 109.9M270.2 110.5A152.3 152.3 0 0 1 273.3 111.0M276.5 111.6A152.3 152.3 0 0 1 279.5 112.3M282.7 113.0A152.3 152.3 0 0 1 285.6 113.8M288.5 114.6A152.3 152.3 0 0 1 291.3 115.4M294.2 116.4A152.3 152.3 0 0 1 297.0 117.3M299.9 118.4A152.3 152.3 0 0 1 302.3 119.3M305.2 120.5A152.3 152.3 0 0 1 307.6 121.6M310.4 122.8A152.3 152.3 0 0 1 312.8 124.0M315.4 125.3A152.3 152.3 0 0 1 317.8 126.5M320.2 127.9A152.3 152.3 0 0 1 322.5 129.2M325.0 130.7A152.3 152.3 0 0 1 327.2 132.0M329.5 133.5A152.3 152.3 0 0 1 331.7 135.0M334.0 136.6A152.3 152.3 0 0 1 336.1 138.1M338.3 139.7A152.3 152.3 0 0 1 340.3 141.3M342.5 143.0A152.3 152.3 0 0 1 344.4 144.6M346.5 146.5A152.3 152.3 0 0 1 348.4 148.2M350.4 150.1A152.3 152.3 0 0 1 352.3 151.8M354.2 153.8A152.3 152.3 0 0 1 356.0 155.6M357.9 157.6A152.3 152.3 0 0 1 359.6 159.5M361.5 161.6A152.3 152.3 0 0 1 363.1 163.5M364.8 165.7A152.3 152.3 0 0 1 366.4 167.7M368.1 169.9A152.3 152.3 0 0 1 369.6 171.9M371.3 174.3A152.3 152.3 0 0 1 372.7 176.4M374.2 178.7A152.3 152.3 0 0 1 375.6 181.0M377.1 183.4A152.3 152.3 0 0 1 378.4 185.7M379.8 188.2A152.3 152.3 0 0 1 381.0 190.5M382.3 193.1A152.3 152.3 0 0 1 383.5 195.5M384.8 198.2A152.3 152.3 0 0 1 385.8 200.7M387.0 203.5A152.3 152.3 0 0 1 388.0 206.0M389.1 208.8A152.3 152.3 0 0 1 390.0 211.5M391.0 214.5A152.3 152.3 0 0 1 391.8 217.2M392.7 220.2A152.3 152.3 0 0 1 393.4 223.1M394.2 226.2A152.3 152.3 0 0 1 394.9 229.1M395.5 232.4A152.3 152.3 0 0 1 396.1 235.4M396.6 238.8A152.3 152.3 0 0 1 397.0 242.0M397.4 245.4A152.3 152.3 0 0 1 397.7 248.7M398.0 252.4A152.3 152.3 0 0 1 398.1 255.9M398.2 259.6A152.3 152.3 0 0 1 398.2 260.8" fill="none" stroke="#f2f2f2" stroke-width="1.05"/><path d="M388.5 314.3A152.3 152.3 0 0 1 386.1 320.3M382.9 327.3A152.3 152.3 0 0 1 378.9 335.0M373.0 344.6A152.3 152.3 0 0 1 361.7 359.7M344.8 376.6A152.3 152.3 0 0 1 329.7 387.9M320.1 393.8A152.3 152.3 0 0 1 312.4 397.8M305.4 401.0A152.3 152.3 0 0 1 299.4 403.4M104.1 205.4A152.3 152.3 0 0 1 106.7 199.1M110.1 191.9A152.3 152.3 0 0 1 114.5 183.7M121.4 173.1A152.3 152.3 0 0 1 158.2 136.3M168.8 129.4A152.3 152.3 0 0 1 177.0 125.0M184.2 121.6A152.3 152.3 0 0 1 190.5 119.0" fill="none" stroke="#c4c4c4" stroke-width="0.75"/>
<rect x="505.4" y="22" width="1.6" height="466" fill="#170858"/>
</svg>

<div class="abs" id="bp"><div class="abs t"></div>
 <div class="abs" style="left:3px;top:12px;width:1px;height:24px;background:#fff"></div>
 <div class="abs" style="left:1.5px;top:145.5px;width:4px;height:12px;background:#fff"></div>
</div>

<div class="abs" id="lp">
 <div class="abs title"></div>
 <div class="abs tabs"></div>
 <div class="abs tab1"></div>
 <div class="abs sep" style="left:21.6px"></div>
 <div class="abs sep" style="left:43.6px"></div>
 <div class="abs sep" style="left:65.7px"></div>
 <!-- blend row -->
 <div class="abs wbox" style="left:2px;top:20px;width:78px;height:14px;"></div>
 <div class="abs wbox" style="left:115px;top:20px;width:25px;height:12px;"></div>
 <div class="abs" style="left:141px;top:20px;width:10px;height:12px;background:#e4e4e4;border:1px solid #bcbcbc;box-sizing:border-box;"></div>
 <div class="abs wbox" style="left:115px;top:38px;width:25px;height:12px;"></div>
 <div class="abs" style="left:141px;top:38px;width:10px;height:12px;background:#e4e4e4;border:1px solid #bcbcbc;box-sizing:border-box;"></div>
 <div class="abs num" style="left:117.8px;top:22.9px;">100%</div>
 <div class="abs num" style="left:117.8px;top:41.2px;">100%</div>
 <!-- list top border -->
 <div class="abs" style="left:0;top:50px;width:151px;height:1px;background:#e4e4e4"></div>
 <div class="abs" style="left:0;top:51px;width:151px;height:1px;background:#a0a0a0"></div>
 <!-- eye column -->
 <div class="abs" style="left:0;top:52px;width:15px;height:95px;background:#dcdcdc;border-right:1px solid #b6b6b6;box-sizing:border-box"></div>
 <!-- rows -->
 <div class="abs" style="left:15px;top:52px;width:128px;height:23px;background:#3399ff"></div>
 <div class="abs" style="left:15px;top:52px;width:2px;height:23px;background:#58acff"></div>
 <div class="abs hl" style="top:75px"></div><div class="abs ll" style="top:76px"></div>
 <div class="abs hl" style="top:99px"></div><div class="abs ll" style="top:100px"></div>
 <div class="abs hl" style="top:123px"></div><div class="abs ll" style="top:124px"></div>
 <div class="abs hl" style="top:146px"></div><div class="abs ll" style="top:147px"></div>
 <div class="abs thumb" style="top:53.6px;outline:1px solid #cfc6ae;background:#060606"><svg width="20" height="20" viewBox="0 0 20 20" style="position:absolute;left:0;top:0"><g fill="#2a2a30" filter="url(#tb)"><rect x="9.4" y="7.6" width="1" height="1"/><rect x="7" y="11" width="1" height="1"/><rect x="12" y="12.6" width="1" height="1"/><rect x="5.6" y="6" width="1" height="1"/><rect x="13" y="5" width="1" height="1"/><rect x="10" y="15" width="1" height="1"/></g></svg></div>
 <div class="abs thumb" style="top:77.8px" id="t2"><svg width="20" height="20" viewBox="0 0 20 20" style="position:absolute;left:0;top:0"><g filter="url(#tb)"><rect x="0.2" y="0" width="1" height="20" fill="#3a3a3a"/><rect x="4.6" y="1.5" width="1" height="17" fill="#5a1a10"/><rect x="9.6" y="1.5" width="1" height="17" fill="#6a4a18"/><rect x="14.6" y="1.5" width="1" height="17" fill="#183a78"/><rect x="18.4" y="1.5" width=".8" height="17" fill="#2a1050"/><rect x="2" y="4.4" width="16" height=".9" fill="#1e4030"/><rect x="2" y="9.3" width="16" height="1.1" fill="#4a2a58"/><rect x="2" y="14.2" width="16" height=".9" fill="#2a3018"/><rect x="9" y="8.4" width="2.4" height="2.6" fill="#b07070"/><rect x="14" y="7.6" width="3.4" height="1.8" fill="#6a9a20"/><rect x="2.4" y="8.8" width="3" height="1.8" fill="#5a2a9a"/><rect x="14" y="4" width="3" height="1.6" fill="#a03a3a"/><rect x="9" y="3" width="4" height="1.4" fill="#1e6a40"/><rect x="14.4" y="11" width="1.4" height="4" fill="#2a4aa0"/><rect x="9.4" y="11.4" width="1.4" height="4" fill="#8a5a20"/></g></svg></div>
 <div class="abs thumb" style="top:101.6px" id="t3"><svg width="20" height="20" viewBox="0 0 20 20" style="position:absolute;left:0;top:0"><g filter="url(#tb)"><rect x="2.3" y="1" width="1.3" height="18" fill="#601414"/><rect x="6.9" y="1" width="1.3" height="13" fill="#8a7458"/><rect x="6.7" y="14" width="1.7" height="4" fill="#2060c0"/><rect x="11.9" y="1" width="1.3" height="6" fill="#4868c8"/><rect x="11.9" y="7" width="1.3" height="8" fill="#80803c"/><rect x="11.9" y="15" width="1.3" height="3" fill="#302878"/><rect x="17" y="1" width="1.5" height="18" fill="#42209a"/><rect x="4" y="2.8" width="10" height="0.8" fill="#50585a"/><rect x="4.5" y="7.4" width="10" height="1" fill="#a0a096"/><rect x="4" y="11.6" width="11" height="0.8" fill="#3a4040"/><rect x="2" y="15.5" width="2.2" height="2.2" fill="#6a5a80"/><rect x="15" y="15.5" width="2.4" height="2.4" fill="#5a5a20"/><rect x="6.5" y="18" width="3" height="1" fill="#6a5a10"/></g></svg></div>
 <div class="abs thumb" id="t4" style="top:125.3px;background:linear-gradient(to right,#100004 0%,#7a0818 7%,#e01030 15%,#e05020 27%,#e09020 36%,#e0c820 43%,#60b020 50%,#20a860 56%,#20b0e0 62%,#2060e0 71%,#3028d8 80%,#5010c0 89%,#28085a 96%,#08001a 100%);"><div class="abs" style="left:0;top:0;width:20px;height:19.5px;background:linear-gradient(to bottom,rgba(0,0,0,.95) 0%,rgba(0,0,0,.35) 12%,rgba(0,0,0,0) 30%,rgba(0,0,0,0) 75%,rgba(0,0,0,.4) 90%,rgba(0,0,0,.95) 100%)"></div><svg width="20" height="20" viewBox="0 0 20 20" style="position:absolute;left:0;top:0"><g filter="url(#tb)" fill="#fff" opacity=".45"><rect x="8" y="9" width="1.4" height="1.4"/><rect x="10.6" y="7.5" width="1.2" height="1.2"/><rect x="6" y="5" width="1" height="1"/><rect x="12.6" y="12" width="1.2" height="1.2"/><rect x="15.6" y="16.5" width="1.4" height="1.4"/><rect x="8" y="15.5" width="1.4" height="1.8"/><rect x="16" y="8" width="1" height="1"/><rect x="3" y="10" width="1" height="1"/></g></svg></div>
 <!-- left gutter under rows -->
 <!-- scrollbar -->
 <div class="abs" style="left:143px;top:52px;width:8px;height:281px;background:#e9e9e9;border-left:1px solid #f4f4f4;box-sizing:border-box;"></div>
 <!-- bottom bar -->
 <div class="abs" style="left:0;top:332.5px;width:151px;height:1px;background:#a8a8a8"></div>
 <div class="abs" style="left:0;top:333.5px;width:151px;height:13px;background:#d2d2d2"></div>
</div>

<!-- bottom right panel -->
<div class="abs" style="left:693px;top:364px;width:12px;height:143px;background:#d8d8d8;border-left:1px solid #666;box-sizing:border-box;">
 <div class="abs" style="left:0;top:0;width:12px;height:7px;background:linear-gradient(#2e2e2e,#505050)"></div>
 <div class="abs" style="left:0;top:7px;width:12px;height:11px;background:#e2e2e2"></div>
 <div class="abs" style="left:8px;top:119px;width:4px;height:24px;background:#e4e4e4;border-left:1px solid #222;border-top:1px solid #222;box-sizing:border-box"></div>
 <div class="abs" style="left:8px;top:132px;width:4px;height:1px;background:#222"></div>
</div>

<svg class="abs" style="left:0;top:0" width="705" height="507" viewBox="0 0 705 507">
<defs>
<g id="eye"><rect x="-1.2" y="-1.6" width="9.8" height="9.2" fill="#e3e3e3"/><path d="M-1.2 -1.6h9.8" stroke="#c4c4c4" stroke-width=".8"/><path d="M-1.2 -1.6v9.2" stroke="#cfcfcf" stroke-width=".6"/><path d="M0 2.6C1.2 .6 3.2-.2 4.8.2 6.4.6 7.2 1.8 7.4 2.8 6.6 4.4 5 5.6 3.4 5.6 1.8 5.6.6 4.4 0 2.6Z" fill="#5a5a5a"/><ellipse cx="3.9" cy="2.9" rx="1.9" ry="1.7" fill="#0c0c0c"/><path d="M.2 2.2C1.6.2 4-.6 5.6.2" stroke="#8a8a8a" stroke-width=".6" fill="none"/><circle cx="5.4" cy="3.6" r=".6" fill="#b8b8b8"/></g>
</defs>

<!-- title bar icons -->
<path d="M695.3 19.4v3.2l-2.1-1.6zM697.8 19.4v3.2l-2.1-1.6z" fill="#f4f4f4"/>
<path d="M700.2 19v4" stroke="#777" stroke-width=".6" stroke-dasharray=".7 .7"/>
<path d="M702.7 19.3l3.2 3.4M702.7 22.7l3.2-3.4" stroke="#f0f0f0" stroke-width="1"/>
<!-- panel menu -->
<path d="M697.8 28.9h2.6l-1.3 1.7z" fill="#2a2a2a"/>
<path d="M701.3 28.2h4M701.3 29.6h4M701.3 31h4" stroke="#3a3a3a" stroke-width=".8"/>
<!-- arrow buttons -->
<path d="M699.4 42.4v3l1.9-1.5z" fill="#6f83bd"/>
<path d="M699.4 60v3l1.9-1.5z" fill="#6f83bd"/>
<!-- lock icons -->
<g>
<rect x="581.3" y="56.9" width="6.4" height="6.4" fill="#fff" stroke="#8a8a8a" stroke-width=".8"/>
<path d="M582 57.6h1.7v1.7h-1.7zM585.3 57.6h1.7v1.7h-1.7zM583.7 59.3h1.6v1.6h-1.6zM582 60.9h1.7v1.7h-1.7zM585.3 60.9h1.7v1.7h-1.7z" fill="#d2d2d2"/>
<path d="M599.6 56.7l-4.6 4.4" stroke="#4a4a4a" stroke-width="1.1" stroke-linecap="round"/>
<path d="M595.6 60.2l1 1.2c-.8 1.6-2.8 2.6-4.8 2.4 1.4-.8 1.6-2.6 3.8-3.6z" fill="#222"/>
<path d="M606.6 56.5l1.3 1.7h-.9v1.6h1.6v-.9l1.7 1.3-1.7 1.3v-.9h-1.6v1.6h.9l-1.3 1.7-1.3-1.7h.9v-1.6h-1.6v.9l-1.7-1.3 1.7-1.3v.9h1.6v-1.6h-.9z" fill="#2e2e2e"/>
<path d="M616.3 60.2v-1.1a1.85 1.85 0 0 1 3.7 0v1.1" fill="none" stroke="#3a3a3a" stroke-width="1"/>
<rect x="615.2" y="59.8" width="5.9" height="4" rx=".6" fill="#343434"/>
</g>
<!-- scrollbar arrows -->
<path d="M701.8 75.6h3l-1.5-1.9z" fill="#777"/>
<path d="M700.6 344.3h3.4l-1.7 2.1z" fill="#555"/>
<!-- bottom icons -->
<g>
<g fill="none" stroke="#9a9a9a" stroke-width="1.3"><ellipse cx="586.3" cy="355.5" rx="2.2" ry="1.4"/><ellipse cx="591.3" cy="355.5" rx="2.2" ry="1.4"/></g>
<text x="601.6" y="358.6" font-size="9.5" font-style="italic" font-weight="bold" font-family="Liberation Serif" fill="#2a2a2a">fx</text>
<rect x="611.2" y="357.6" width="1" height="1" fill="#222"/>
<rect x="618.6" y="352.4" width="8.4" height="6.4" fill="#8a8a8a" stroke="#4a4a4a" stroke-width=".8"/>
<circle cx="622.8" cy="355.6" r="2" fill="#fff"/>
<circle cx="640" cy="355.4" r="3.3" fill="#f4f4f4" stroke="#333" stroke-width=".8"/>
<path d="M637.7 357.7a3.3 3.3 0 0 1 4.6-4.6z" fill="#222"/>
<rect x="644.6" y="357.6" width="1" height="1" fill="#222"/>
<path d="M652.4 353.6h2.6l.8.9h3.8v3.8h-7.2z" fill="#f0f0f0" stroke="#555" stroke-width=".8"/>
<path d="M670.6 353.2h5.6v5.6h-5.6z" fill="#f6f6f6" stroke="#4a4a4a" stroke-width=".8"/>
<path d="M670.6 356.6h2.4v2.2" fill="none" stroke="#4a4a4a" stroke-width=".8"/>
<path d="M688.2 353.4h4.6l-.5 5.4h-3.6z" fill="#d8d8d8" stroke="#444" stroke-width=".8"/>
<path d="M687.8 353.2h5.4M689.6 352.4h1.8" stroke="#333" stroke-width=".9"/>
<path d="M704.8 358.2l-3.4 3.4M704.8 360.2l-1.6 1.6" stroke="#a8a8a8" stroke-width=".7"/>
</g>
<!-- tabs -->
<g font-family="'Liberation Sans','Noto Sans CJK SC',sans-serif">
<text x="559" y="33.1" font-size="7.4" fill="#2a2a2a" textLength="14.2" lengthAdjust="spacingAndGlyphs">图层</text>
<text x="580.8" y="33.1" font-size="7.4" fill="#4a4a4a" textLength="14.2" lengthAdjust="spacingAndGlyphs">通道</text>
<text x="603.3" y="33.1" font-size="7.4" fill="#4a4a4a" textLength="14.2" lengthAdjust="spacingAndGlyphs">路径</text>
<text x="561.4" y="48.1" font-size="7.6" fill="#1a1a1a" textLength="14.4" lengthAdjust="spacingAndGlyphs">正常</text>
<text x="635.6" y="47.1" font-size="7.8" fill="#1a1a1a" textLength="31.6" lengthAdjust="spacingAndGlyphs">不透明度:</text>
<text x="559.6" y="64.9" font-size="7.8" fill="#1a1a1a" textLength="17" lengthAdjust="spacingAndGlyphs">锁定:</text>
<text x="650.4" y="64.2" font-size="7.8" fill="#1a1a1a" textLength="16.8" lengthAdjust="spacingAndGlyphs">填充:</text>
</g>
<!-- dropdown arrow -->
<path d="M626.6 43.2h4.6l-2.3 2.6z" fill="#111"/>
<!-- layer names -->
<g font-family="'Liberation Sans','Noto Sans CJK SC',sans-serif" font-size="7.7">
<text x="596.9" y="83.9" fill="#fff" textLength="14.9" lengthAdjust="spacingAndGlyphs">图层</text>
<text x="613.8" y="83.9" font-size="7.4" fill="#fff" font-family="Liberation Sans" textLength="3.6" lengthAdjust="spacingAndGlyphs">2</text>
<text x="596.9" y="107.6" fill="#151515" textLength="14.9" lengthAdjust="spacingAndGlyphs">图层</text>
<text x="614.2" y="107.6" font-size="7.4" fill="#151515" font-family="Liberation Sans" textLength="3.6" lengthAdjust="spacingAndGlyphs">1</text>
<text x="618.9" y="107.6" fill="#151515" textLength="14.9" lengthAdjust="spacingAndGlyphs">副本</text>
<text x="636.4" y="107.6" font-size="7.4" fill="#151515" font-family="Liberation Sans" textLength="3.6" lengthAdjust="spacingAndGlyphs">2</text>
<text x="596.9" y="131.25" fill="#151515" textLength="14.9" lengthAdjust="spacingAndGlyphs">图层</text>
<text x="614.2" y="131.25" font-size="7.4" fill="#151515" font-family="Liberation Sans" textLength="3.6" lengthAdjust="spacingAndGlyphs">1</text>
<text x="618.9" y="131.25" fill="#151515" textLength="14.9" lengthAdjust="spacingAndGlyphs">副本</text>
<text x="596.9" y="154.9" fill="#151515" textLength="14.9" lengthAdjust="spacingAndGlyphs">图层</text>
<text x="614.2" y="154.9" font-size="7.4" fill="#151515" font-family="Liberation Sans" textLength="3.6" lengthAdjust="spacingAndGlyphs">1</text>
</g>
<!-- eyes -->
<use href="#eye" x="558.8" y="76.7"/>
<use href="#eye" x="558.8" y="100.4"/>
<use href="#eye" x="558.8" y="124.1"/>
<use href="#eye" x="558.8" y="147.8"/>
<!-- bottom right panel text -->
<text x="697.5" y="380.3" font-size="7.6" fill="#5a6a80" font-family="'Liberation Sans','Noto Sans CJK SC',sans-serif">调</text>
<text x="697" y="394.3" font-size="7.6" fill="#222" font-family="'Liberation Sans','Noto Sans CJK SC',sans-serif">添</text>
</svg>
</body></html>
